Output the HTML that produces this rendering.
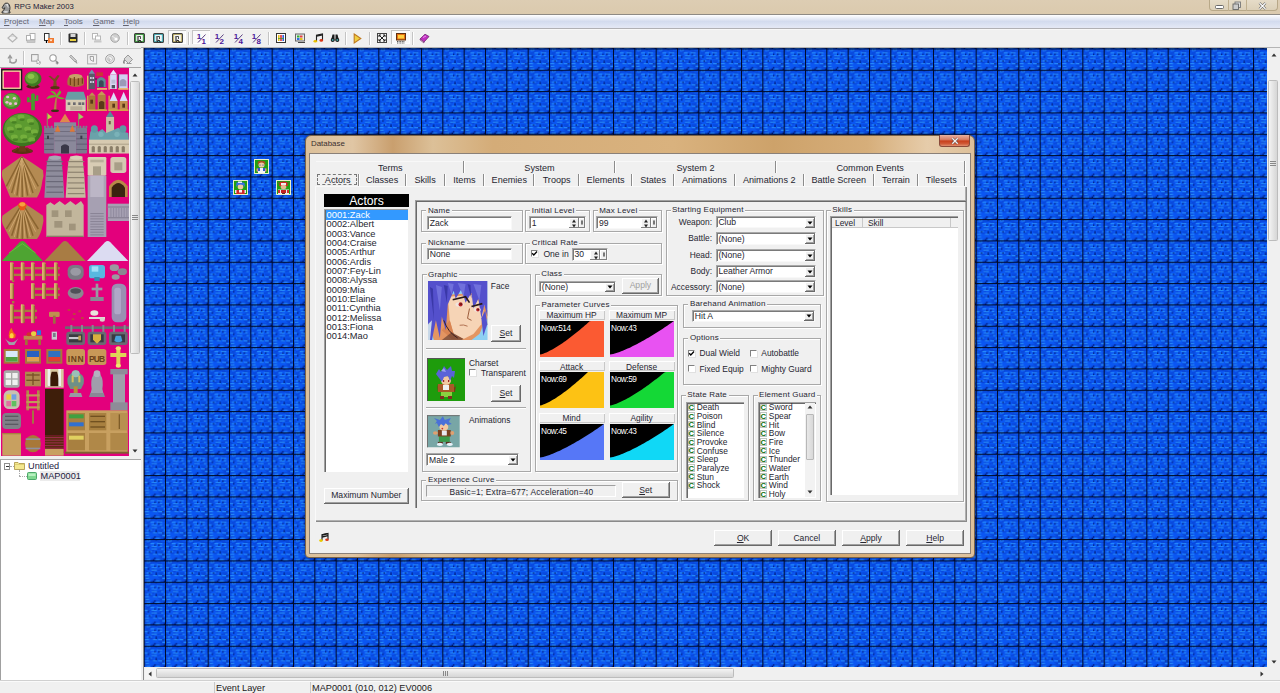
<!DOCTYPE html>
<html><head><meta charset="utf-8">
<style>
*{margin:0;padding:0;box-sizing:border-box}
html,body{width:1280px;height:693px;overflow:hidden;background:#f0f0f0;font-family:"Liberation Sans",sans-serif;color:#262630}
.a{position:absolute}
.t{position:absolute;white-space:nowrap;line-height:1}
svg.a{overflow:visible}
#title{left:0;top:0;width:1280px;height:15px;background:linear-gradient(#ddcdb3,#dbcaae);border-bottom:1px solid #8e8a84}
#menu{left:0;top:15px;width:1280px;height:14px;background:linear-gradient(#ffffff,#f2f4fa 15%,#d3dbee 50%,#dfe5f4 85%,#e4e8f4);border-bottom:1px solid #b0b0b4}
#menu .t{font-size:8px;top:2.5px;color:#646470}
#tool{left:0;top:29px;width:1280px;height:19px;background:#f0f0f0;border-top:1px solid #f8f8f8}
.sep{position:absolute;width:2px;background:#c9c9c9;border-right:1px solid #fff}
#map{left:144px;top:48px;width:1123px;height:619px;background:#0b54e4;overflow:hidden}
#lp{left:0;top:48px;width:141px;height:632px;background:#f0f0f0}
#tileset{left:1px;top:68px;width:128px;height:388px;background:#e3007c;overflow:hidden}
#tree{left:0;top:459px;width:141px;height:221px;background:#fff;border-top:1px solid #a8a8a8;border-left:1px solid #a0a0a0}
#status{left:0;top:680px;width:1280px;height:13px;background:#f0f0f0;border-top:1px solid #d4d4d4}
#status .t{font-size:9.2px;top:2.6px;color:#202020}

</style></head><body>
<div id="title" class="a">
  <div class="t" style="left:14.3px;top:2.8px;font-size:7.7px;color:#1a2038">RPG Maker 2003</div>
</div>
<div id="menu" class="a">
  <div class="t" style="left:4px"><u>P</u>roject</div>
  <div class="t" style="left:39px"><u>M</u>ap</div>
  <div class="t" style="left:64px"><u>T</u>ools</div>
  <div class="t" style="left:93px"><u>G</u>ame</div>
  <div class="t" style="left:123px"><u>H</u>elp</div>
</div>
<div id="tool" class="a"></div>
<div id="lp" class="a"></div>
<div id="tileset" class="a"></div>
<div id="tree" class="a"></div>
<div id="map" class="a">
<svg width="1123" height="619" style="position:absolute;left:0;top:0">
<defs>
<pattern id="water" patternUnits="userSpaceOnUse" width="21.3333" height="21.3333" patternTransform="translate(-0.33,0.42)"><rect width="21.3333" height="21.3333" fill="#0a56f2"/><rect x="0.000" y="0.000" width="4.000" height="1.333" fill="#0846d8"/><rect x="10.667" y="0.000" width="4.000" height="1.333" fill="#0846d8"/><rect x="18.667" y="0.000" width="1.333" height="1.333" fill="#0846d8"/><rect x="2.667" y="1.333" width="4.000" height="1.333" fill="#0846d8"/><rect x="6.667" y="1.333" width="4.000" height="1.333" fill="#0846d8"/><rect x="10.667" y="1.333" width="2.667" height="1.333" fill="#0846d8"/><rect x="13.333" y="1.333" width="2.667" height="1.333" fill="#0846d8"/><rect x="16.000" y="1.333" width="1.333" height="1.333" fill="#0846d8"/><rect x="0.000" y="2.667" width="1.333" height="1.333" fill="#0846d8"/><rect x="1.333" y="2.667" width="1.333" height="1.333" fill="#0846d8"/><rect x="5.333" y="2.667" width="2.667" height="1.333" fill="#0846d8"/><rect x="14.667" y="2.667" width="4.000" height="1.333" fill="#0846d8"/><rect x="18.667" y="2.667" width="2.667" height="1.333" fill="#0846d8"/><rect x="2.667" y="4.000" width="1.333" height="1.333" fill="#0846d8"/><rect x="4.000" y="4.000" width="2.667" height="1.333" fill="#0846d8"/><rect x="14.667" y="4.000" width="2.667" height="1.333" fill="#0846d8"/><rect x="1.333" y="5.333" width="4.000" height="1.333" fill="#0846d8"/><rect x="20.000" y="5.333" width="1.333" height="1.333" fill="#0846d8"/><rect x="1.333" y="6.667" width="1.333" height="1.333" fill="#0846d8"/><rect x="4.000" y="6.667" width="2.667" height="1.333" fill="#0846d8"/><rect x="17.333" y="6.667" width="1.333" height="1.333" fill="#0846d8"/><rect x="0.000" y="8.000" width="1.333" height="1.333" fill="#0846d8"/><rect x="8.000" y="8.000" width="2.667" height="1.333" fill="#0846d8"/><rect x="16.000" y="8.000" width="2.667" height="1.333" fill="#0846d8"/><rect x="18.667" y="8.000" width="1.333" height="1.333" fill="#0846d8"/><rect x="0.000" y="9.333" width="2.667" height="1.333" fill="#0846d8"/><rect x="9.333" y="9.333" width="2.667" height="1.333" fill="#0846d8"/><rect x="12.000" y="9.333" width="4.000" height="1.333" fill="#0846d8"/><rect x="16.000" y="9.333" width="2.667" height="1.333" fill="#0846d8"/><rect x="18.667" y="9.333" width="1.333" height="1.333" fill="#0846d8"/><rect x="1.333" y="10.667" width="2.667" height="1.333" fill="#0846d8"/><rect x="8.000" y="10.667" width="2.667" height="1.333" fill="#0846d8"/><rect x="5.333" y="12.000" width="1.333" height="1.333" fill="#0846d8"/><rect x="14.667" y="12.000" width="2.667" height="1.333" fill="#0846d8"/><rect x="17.333" y="12.000" width="2.667" height="1.333" fill="#0846d8"/><rect x="0.000" y="13.333" width="2.667" height="1.333" fill="#0846d8"/><rect x="5.333" y="13.333" width="4.000" height="1.333" fill="#0846d8"/><rect x="16.000" y="13.333" width="2.667" height="1.333" fill="#0846d8"/><rect x="9.333" y="14.667" width="2.667" height="1.333" fill="#0846d8"/><rect x="18.667" y="14.667" width="2.667" height="1.333" fill="#0846d8"/><rect x="0.000" y="16.000" width="4.000" height="1.333" fill="#0846d8"/><rect x="14.667" y="16.000" width="4.000" height="1.333" fill="#0846d8"/><rect x="18.667" y="16.000" width="1.333" height="1.333" fill="#0846d8"/><rect x="0.000" y="17.333" width="2.667" height="1.333" fill="#0846d8"/><rect x="16.000" y="17.333" width="2.667" height="1.333" fill="#0846d8"/><rect x="0.000" y="18.667" width="4.000" height="1.333" fill="#0846d8"/><rect x="4.000" y="18.667" width="1.333" height="1.333" fill="#0846d8"/><rect x="9.333" y="18.667" width="4.000" height="1.333" fill="#0846d8"/><rect x="13.333" y="18.667" width="4.000" height="1.333" fill="#0846d8"/><rect x="17.333" y="18.667" width="4.000" height="1.333" fill="#0846d8"/><rect x="2.667" y="20.000" width="1.333" height="1.333" fill="#0846d8"/><rect x="4.000" y="20.000" width="1.333" height="1.333" fill="#0846d8"/><rect x="6.667" y="20.000" width="4.000" height="1.333" fill="#0846d8"/><rect x="17.333" y="20.000" width="4.000" height="1.333" fill="#0846d8"/><rect x="2.667" y="1.333" width="4.000" height="1.067" fill="#30a0ff" opacity=".8"/><rect x="6.667" y="4.000" width="4.000" height="1.067" fill="#30a0ff" opacity=".8"/><rect x="13.333" y="4.000" width="5.333" height="1.067" fill="#30a0ff" opacity=".8"/><rect x="0.000" y="6.667" width="4.000" height="1.067" fill="#30a0ff" opacity=".8"/><rect x="8.000" y="6.667" width="5.333" height="1.067" fill="#30a0ff" opacity=".8"/><rect x="16.000" y="6.667" width="2.667" height="1.067" fill="#30a0ff" opacity=".8"/><rect x="8.000" y="9.333" width="5.333" height="1.067" fill="#30a0ff" opacity=".8"/><rect x="17.333" y="9.333" width="2.667" height="1.067" fill="#30a0ff" opacity=".8"/><rect x="2.667" y="12.000" width="5.333" height="1.067" fill="#30a0ff" opacity=".8"/><rect x="20.000" y="12.000" width="1.333" height="1.067" fill="#30a0ff" opacity=".8"/><rect x="1.333" y="14.667" width="4.000" height="1.067" fill="#30a0ff" opacity=".8"/><rect x="9.333" y="14.667" width="4.000" height="1.067" fill="#30a0ff" opacity=".8"/><rect x="14.667" y="14.667" width="5.333" height="1.067" fill="#30a0ff" opacity=".8"/><rect x="1.333" y="17.333" width="4.000" height="1.067" fill="#30a0ff" opacity=".8"/><rect x="18.667" y="17.333" width="2.667" height="1.067" fill="#30a0ff" opacity=".8"/><rect x="2.667" y="20.000" width="4.000" height="1.067" fill="#30a0ff" opacity=".8"/><rect x="12.000" y="20.000" width="4.000" height="1.067" fill="#30a0ff" opacity=".8"/><rect x="9.333" y="20.000" width="1.333" height="1.333" fill="#001a7a"/><rect x="10.667" y="5.333" width="1.333" height="1.333" fill="#001a7a"/><rect x="12.000" y="12.000" width="1.333" height="1.333" fill="#001a7a"/><rect x="20.000" y="20.000" width="1.333" height="1.333" fill="#001a7a"/><rect x="4.000" y="0.000" width="1.333" height="1.333" fill="#001a7a"/><rect x="5.333" y="12.000" width="1.333" height="1.333" fill="#001a7a"/><rect x="12.000" y="13.333" width="1.333" height="1.333" fill="#001a7a"/><rect x="12.000" y="0.000" width="1.333" height="1.333" fill="#001a7a"/><rect x="18.667" y="14.667" width="1.333" height="1.333" fill="#001a7a"/><rect x="14.667" y="5.333" width="1.333" height="1.333" fill="#001a7a"/><rect x="1.333" y="0.000" width="1.333" height="1.333" fill="#001a7a"/><rect x="10.667" y="18.667" width="1.333" height="1.333" fill="#001a7a"/><rect x="4.000" y="8.000" width="1.333" height="1.333" fill="#001a7a"/><rect x="0.000" y="17.333" width="1.333" height="1.333" fill="#001a7a"/><rect x="0" y="0" width="21.3333" height="1.0" fill="#000a28"/><rect x="0" y="0" width="1.0" height="21.3333" fill="#000a28"/></pattern>
</defs>
<rect x="0" y="0" width="1123" height="619" fill="url(#water)"/>
</svg>
</div>
<div id="status" class="a">
  <div class="t" style="left:216px">Event Layer</div>
  <div class="t" style="left:312px">MAP0001 (010, 012) EV0006</div>
</div>
<svg class="a" style="left:7px;top:33px" width="11" height="10" viewBox="0 0 11 10"><path d="M5.5 1L10 5L5.5 9L1 5Z" fill="none" stroke="#b4b4b4" stroke-width="1.2"/><path d="M3 3H8" stroke="#c8c8c8"/></svg><svg class="a" style="left:26px;top:32.5px" width="10" height="10" viewBox="0 0 10 10"><rect x="4" y="0.5" width="5" height="6" fill="#fff" stroke="#b0b0b0"/><rect x="0.5" y="2.5" width="4" height="5" fill="#fff" stroke="#b0b0b0"/><rect x="1" y="7" width="8" height="2.5" fill="#c8c8c8" stroke="#b0b0b0" stroke-width=".6"/></svg><svg class="a" style="left:44px;top:32.5px" width="10" height="11" viewBox="0 0 10 11"><rect x="0.5" y="0.5" width="4.5" height="7" fill="#fff" stroke="#333"/><path d="M2.5 7V10" stroke="#000" stroke-width="1.2"/><rect x="4" y="5" width="6" height="5" fill="#f07a30"/><path d="M5.5 6.5H8.5L7 8.5Z" fill="#fff"/></svg><div class="a" style="left:60px;top:32px;width:2px;height:13px;border-left:1px solid #c4c4c4;border-right:1px solid #fff"></div><svg class="a" style="left:68px;top:33px" width="10" height="10" viewBox="0 0 10 10"><rect x="0.5" y="0.5" width="9" height="9" rx="1" fill="#2a2a2a"/><rect x="2.5" y="1" width="5" height="3" fill="#d8d8d8"/><rect x="2" y="6" width="6" height="2" fill="#e8d040"/></svg><div class="a" style="left:84px;top:32px;width:2px;height:13px;border-left:1px solid #c4c4c4;border-right:1px solid #fff"></div><svg class="a" style="left:92px;top:32.5px" width="10" height="10" viewBox="0 0 10 10"><rect x="0.5" y="0.5" width="5" height="5.5" fill="#fff" stroke="#b8b8b8"/><rect x="3.5" y="3" width="5" height="4" fill="#fff" stroke="#b8b8b8"/><rect x="2" y="7.5" width="7.5" height="2" fill="#c8c8c8"/></svg><svg class="a" style="left:110px;top:32.5px" width="11" height="10" viewBox="0 0 11 10"><circle cx="5" cy="5" r="4.3" fill="#cfcfcf" stroke="#a8a8a8"/><circle cx="6" cy="6" r="1.6" fill="#fff"/><path d="M2 3L5 5" stroke="#eee"/></svg><div class="a" style="left:127px;top:32px;width:2px;height:13px;border-left:1px solid #c4c4c4;border-right:1px solid #fff"></div><svg class="a" style="left:134.4px;top:32.5px" width="11" height="10" viewBox="0 0 11 10"><rect x="0.6" y="0.6" width="9.8" height="8.8" rx="1" fill="#48b848" stroke="#3a3a3a" stroke-width="1.1"/><rect x="2.2" y="2" width="6.6" height="6" fill="#f4f4f4"/><path d="M4 3V8.5L6 7L7.5 9.5" stroke="#111" stroke-width="1" fill="none"/><path d="M4.5 3.5H6.5V6" stroke="#222" stroke-width=".8" fill="none"/></svg><svg class="a" style="left:153px;top:32.5px" width="11" height="10" viewBox="0 0 11 10"><rect x="0.6" y="0.6" width="9.8" height="8.8" rx="1" fill="#58d0dc" stroke="#3a3a3a" stroke-width="1.1"/><rect x="2.2" y="2" width="6.6" height="6" fill="#f4f4f4"/><path d="M4 3V8.5L6 7L7.5 9.5" stroke="#111" stroke-width="1" fill="none"/><path d="M4.5 3.5H6.5V6" stroke="#222" stroke-width=".8" fill="none"/></svg><div class="a" style="left:168px;top:30px;width:18px;height:14px;background:#fafafa;box-shadow:inset 1px 1px 0 #c4c4c4,inset -1px -1px 0 #fff"></div><svg class="a" style="left:172.4px;top:32.5px" width="11" height="10" viewBox="0 0 11 10"><rect x="0.6" y="0.6" width="9.8" height="8.8" rx="1" fill="#e2d27e" stroke="#3a3a3a" stroke-width="1.1"/><rect x="2.2" y="2" width="6.6" height="6" fill="#f4f4f4"/><path d="M4 3V8.5L6 7L7.5 9.5" stroke="#111" stroke-width="1" fill="none"/><path d="M4.5 3.5H6.5V6" stroke="#222" stroke-width=".8" fill="none"/></svg><div class="a" style="left:188px;top:32px;width:2px;height:13px;border-left:1px solid #c4c4c4;border-right:1px solid #fff"></div><div class="a" style="left:192px;top:30px;width:18px;height:14px;background:#fafafa;box-shadow:inset 1px 1px 0 #c4c4c4,inset -1px -1px 0 #fff"></div><svg class="a" style="left:196.5px;top:31.5px" width="11" height="12" viewBox="0 0 11 12"><text x="-0.3" y="6.6" font-family="Liberation Sans" font-weight="bold" font-size="8" fill="#4a1498">1</text><path d="M1 10.5L8.5 2.5" stroke="#5a4080" stroke-width="1"/><text x="4.6" y="11.6" font-family="Liberation Sans" font-weight="bold" font-size="8" fill="#4a1498">1</text></svg><svg class="a" style="left:214.8px;top:31.5px" width="11" height="12" viewBox="0 0 11 12"><text x="-0.3" y="6.6" font-family="Liberation Sans" font-weight="bold" font-size="8" fill="#4a1498">1</text><path d="M1 10.5L8.5 2.5" stroke="#5a4080" stroke-width="1"/><text x="4.6" y="11.6" font-family="Liberation Sans" font-weight="bold" font-size="8" fill="#4a1498">2</text></svg><svg class="a" style="left:233.9px;top:31.5px" width="11" height="12" viewBox="0 0 11 12"><text x="-0.3" y="6.6" font-family="Liberation Sans" font-weight="bold" font-size="8" fill="#4a1498">1</text><path d="M1 10.5L8.5 2.5" stroke="#5a4080" stroke-width="1"/><text x="4.6" y="11.6" font-family="Liberation Sans" font-weight="bold" font-size="8" fill="#4a1498">4</text></svg><svg class="a" style="left:252px;top:31.5px" width="11" height="12" viewBox="0 0 11 12"><text x="-0.3" y="6.6" font-family="Liberation Sans" font-weight="bold" font-size="8" fill="#4a1498">1</text><path d="M1 10.5L8.5 2.5" stroke="#5a4080" stroke-width="1"/><text x="4.6" y="11.6" font-family="Liberation Sans" font-weight="bold" font-size="8" fill="#4a1498">8</text></svg><div class="a" style="left:268px;top:32px;width:2px;height:13px;border-left:1px solid #c4c4c4;border-right:1px solid #fff"></div><svg class="a" style="left:276px;top:32.5px" width="10" height="10" viewBox="0 0 10 10"><rect x="0.5" y="0.5" width="9" height="9" fill="#fff" stroke="#333"/><rect x="2" y="2" width="1.6" height="6" fill="#e8c020"/><rect x="4.2" y="2" width="1.6" height="6" fill="#e03030"/><rect x="6.4" y="2" width="1.6" height="6" fill="#3060e0"/><rect x="2" y="5" width="6" height="1" fill="#30a030" opacity=".7"/></svg><svg class="a" style="left:294.5px;top:32.5px" width="11" height="10" viewBox="0 0 11 10"><rect x="0.5" y="1" width="9" height="7" fill="#e8e8e8" stroke="#666"/><rect x="2" y="2.5" width="2.5" height="2" fill="#30b030"/><rect x="5" y="2.5" width="2.5" height="2" fill="#e04040"/><rect x="2" y="5" width="2.5" height="2" fill="#3070e0"/><rect x="5" y="5" width="2.5" height="2" fill="#e0c020"/><path d="M3 9.5H10" stroke="#444"/></svg><svg class="a" style="left:313px;top:32.5px" width="11" height="10" viewBox="0 0 11 10"><path d="M3.5 8V2.2L9.5 1V7" stroke="#222" stroke-width="1.1" fill="none"/><path d="M3.5 3L9.5 1.8" stroke="#222" stroke-width="1.5"/><ellipse cx="2.3" cy="8.3" rx="1.8" ry="1.3" fill="#e8c000"/><ellipse cx="8.3" cy="7.4" rx="1.8" ry="1.3" fill="#d83818"/></svg><svg class="a" style="left:330px;top:33px" width="10" height="9" viewBox="0 0 10 9"><path d="M1 7.5L2.5 1.5H4.5V7.5Z M9 7.5L7.5 1.5H5.5V7.5Z" fill="#1a1a1a"/><circle cx="2.7" cy="7" r="2" fill="#1a1a1a"/><circle cx="7.3" cy="7" r="2" fill="#1a1a1a"/><circle cx="2.7" cy="7" r="1" fill="#40a0a0"/><circle cx="7.3" cy="7" r="1" fill="#40a0a0"/></svg><div class="a" style="left:345px;top:32px;width:2px;height:13px;border-left:1px solid #c4c4c4;border-right:1px solid #fff"></div><svg class="a" style="left:353px;top:32.5px" width="9" height="11" viewBox="0 0 9 11"><path d="M1.2 1L7.8 5.5L1.2 10Z" fill="#f0d040" stroke="#c07a20" stroke-width="1.1"/></svg><div class="a" style="left:369px;top:32px;width:2px;height:13px;border-left:1px solid #c4c4c4;border-right:1px solid #fff"></div><svg class="a" style="left:376.5px;top:32.5px" width="10" height="10" viewBox="0 0 10 10"><rect x="0.5" y="0.5" width="9" height="9" fill="#f4f4f4" stroke="#444"/><path d="M2 2L8 8M8 2L2 8" stroke="#222" stroke-width="1"/><path d="M2 2H4M2 2V4M8 8H6M8 8V6M8 2H6M8 2V4M2 8H4M2 8V6" stroke="#222" stroke-width="1"/></svg><div class="a" style="left:391px;top:30px;width:19px;height:14px;background:#fafafa;box-shadow:inset 1px 1px 0 #c4c4c4,inset -1px -1px 0 #fff"></div><svg class="a" style="left:395.5px;top:32.5px" width="10" height="11" viewBox="0 0 10 11"><rect x="0.5" y="0.5" width="9" height="6.5" fill="#e87010" stroke="#603010"/><rect x="2" y="2" width="6" height="3.5" fill="#ffd040"/><path d="M1 8.5H9M1 10H9" stroke="#555" stroke-dasharray="1 .6"/></svg><div class="a" style="left:412px;top:32px;width:2px;height:13px;border-left:1px solid #c4c4c4;border-right:1px solid #fff"></div><svg class="a" style="left:419px;top:32.5px" width="11" height="10" viewBox="0 0 11 10"><path d="M1 6L6 1.2L10 3.5L5 9Z" fill="#c030c0" stroke="#702070" stroke-width=".8"/><path d="M1 6L5 9V10L1 7Z" fill="#f0e0f0" stroke="#702070" stroke-width=".6"/><path d="M4 4.5L7 3" stroke="#f8a8f8" stroke-width=".8"/></svg><svg class="a" style="left:6.5px;top:53.5px" width="11" height="10" viewBox="0 0 11 10"><path d="M3 9V2.5M1 4.5L3 1.5L5 4.5" stroke="#9a9a9a" stroke-width="1.3" fill="none"/><path d="M3 7.5Q5 10 8 8.5Q10 7 9 5" stroke="#9a9a9a" stroke-width="1.4" fill="none"/></svg><div class="a" style="left:23px;top:51px;width:2px;height:14px;border-left:1px solid #c4c4c4;border-right:1px solid #fff"></div><svg class="a" style="left:31px;top:54px" width="10" height="10" viewBox="0 0 10 10"><rect x="0.6" y="0.6" width="6.5" height="6.5" fill="none" stroke="#9a9a9a" stroke-width="1"/><path d="M6 5.5V10L7.2 8.8L8.5 10.5L9.3 9.8L8.2 8.3H9.8Z" fill="#fff" stroke="#9a9a9a" stroke-width=".7"/></svg><svg class="a" style="left:49.3px;top:54px" width="10" height="10" viewBox="0 0 10 10"><circle cx="4" cy="4" r="3.2" fill="#fff" stroke="#9a9a9a" stroke-width="1.1"/><path d="M6.5 6.5L9 9" stroke="#9a9a9a" stroke-width="1.3"/><path d="M8.2 7.5V10.5M6.7 9H9.7" stroke="#777" stroke-width=".8"/></svg><svg class="a" style="left:68px;top:54px" width="10" height="10" viewBox="0 0 10 10"><path d="M1.5 2.5L3 1L8.5 6.5L7 8Z" fill="#c8c8c8" stroke="#9a9a9a" stroke-width=".8"/><path d="M7 8L9 9.5L8.5 6.5" fill="#888"/><path d="M8.5 10L10 8.5" stroke="#aaa" stroke-width=".6"/></svg><svg class="a" style="left:86.6px;top:53.5px" width="10" height="10.5" viewBox="0 0 10 10.5"><rect x="0.6" y="0.6" width="9" height="9.3" fill="#f2f2f2" stroke="#b0b0b0" stroke-width="1"/><path d="M3 2.5L6.5 2.5V7.5L3.5 6Z" fill="none" stroke="#9a9a9a" stroke-width=".9"/></svg><svg class="a" style="left:105.3px;top:54px" width="10" height="10" viewBox="0 0 10 10"><circle cx="5" cy="5" r="4.3" fill="#f4f4f4" stroke="#9a9a9a" stroke-width="1"/><circle cx="5" cy="5" r="2.5" fill="none" stroke="#b8b8b8" stroke-width=".8"/><path d="M4 4V6.5L5.5 5.5" stroke="#9a9a9a" stroke-width=".7" fill="none"/></svg><svg class="a" style="left:123.4px;top:53.5px" width="11" height="10.5" viewBox="0 0 11 10.5"><path d="M5 1L9.5 5.5L5.5 9.5L1 5Z" fill="#d8d8d8" stroke="#9a9a9a" stroke-width="1"/><path d="M1.5 6Q0 8.5 1.5 9.5" stroke="#777" stroke-width="1.3" fill="none"/><path d="M3.5 9.5H8.5" stroke="#9a9a9a" stroke-width="1"/></svg><svg class="a" style="left:1px;top:68.5px" width="128" height="388" viewBox="0 0 96 291" preserveAspectRatio="none"><rect x="0.7" y="0.7" width="14.6" height="14.6" fill="none" stroke="#1a1a1a" stroke-width="1.3"/><rect x="1.6" y="1.6" width="12.8" height="12.8" fill="none" stroke="#f8f0a0" stroke-width=".9"/><ellipse cx="24" cy="13.2" rx="5" ry="1.6" fill="#4a2810" /><rect x="22.6" y="10" width="2.8" height="3.5" fill="#7a4a20" /><ellipse cx="24" cy="7.3" rx="6.4" ry="5.6" fill="#3e7a22" /><ellipse cx="23.2" cy="6.6" rx="5" ry="4.4" fill="#64a236" /><ellipse cx="22.5" cy="5.5" rx="2.5" ry="2" fill="#8cc44a" /><path d="M39 14.5L39.5 9L35.5 5.5L37 5L40 7.5L42.5 4.5L44 5L41.5 9L42 14.5Z" fill="#7a4a22" /><ellipse cx="40.5" cy="14" rx="3.5" ry="1.2" fill="#5a3214" /><path d="M50 12Q49 6 52 5Q56 3 60 5Q63 6 62 12Q56 15 50 12Z" fill="#a8743e" /><ellipse cx="56" cy="5.5" rx="5" ry="1.8" fill="#c8a068" /><path d="M52 7V12M55 6V13M58 7V12M61 7V11" fill="none" stroke="#6a3e18" stroke-width=".8"/><rect x="64.6" y="5" width="1" height="10.5" fill="#e8d868" /><rect x="65.8" y="3.5" width="4.6" height="11.5" fill="#5a5a68" /><path d="M65.8 3.5L68.1 0.3L70.4 3.5Z" fill="#6a9aa8" /><rect x="66.8" y="6" width="1.2" height="1.5" fill="#d0d0e0" /><rect x="68.6" y="6" width="1.2" height="1.5" fill="#d0d0e0" /><rect x="66.8" y="9" width="1.2" height="1.5" fill="#d0d0e0" /><rect x="68.6" y="9" width="1.2" height="1.5" fill="#d0d0e0" /><rect x="71.5" y="2.5" width="5" height="2.8" fill="#c83838" /><path d="M72 13.5V8Q75 4 78.5 8V13.5Z" fill="#5c8e90" /><path d="M73.5 13.5V9.5Q75 7.5 77 9.5V13.5Z" fill="#3a4a58" /><rect x="72" y="14.4" width="7.5" height="1.1" fill="#e8d868" /><rect x="70.4" y="7" width="1.6" height="1" fill="#3a3a48" /><rect x="80.6" y="5" width="1" height="10.5" fill="#e8d868" /><rect x="81.8" y="4" width="5" height="11" fill="#d8d8f4" /><path d="M81.8 4L84.3 0.5L86.8 4Z" fill="#e8e8ff" /><rect x="82.8" y="8" width="3" height="3" fill="#bcbcd8" /><rect x="83" y="12" width="2.5" height="2.5" fill="#505060" /><rect x="88.5" y="4" width="6.5" height="10.5" fill="#d0d0f0" /><rect x="87.8" y="4" width="0.8" height="10.5" fill="#505060" /><path d="M89 9Q91.5 6 94 9V13H89Z" fill="#9a9ab8" /><rect x="88" y="14.4" width="7.5" height="1.1" fill="#e8d868" /><ellipse cx="8" cy="24" rx="6.8" ry="6.2" fill="#4a8a2a" /><ellipse cx="7.5" cy="23.5" rx="5.4" ry="5" fill="#6aaa40" /><ellipse cx="5" cy="21" rx="1.2" ry="1" fill="#f0b8d8" /><ellipse cx="10" cy="22" rx="1.2" ry="1" fill="#f0b8d8" /><ellipse cx="7" cy="26" rx="1.2" ry="1" fill="#f0b8d8" /><ellipse cx="11" cy="26" rx="1.2" ry="1" fill="#f0b8d8" /><ellipse cx="4.5" cy="25" rx="1.2" ry="1" fill="#f0b8d8" /><path d="M22.6 31V19Q24 17.5 25.4 19V31Z" fill="#4a9a2e" /><path d="M22.6 25H19.5V21.5Q20.5 20.5 21.5 21.5V23.5H22.6Z M25.4 24H28V20Q27 19 26.2 20V22.5H25.4Z" fill="#4a9a2e" /><path d="M39.5 31.5Q40 26 41 21.5L42 21.5Q41.5 26 41.5 31.5Z" fill="#b48446" /><ellipse cx="40.5" cy="31.3" rx="3" ry="1" fill="#3a3010" /><path d="M41 21L34 22.5Q36 18.5 41 20L37 16.5Q41 16 41.5 19.5L44 16Q47 17.5 42.5 20.5L48 22Q45 23.5 42 21.5Z" fill="#6cae2e" /><rect x="48.5" y="22.5" width="15" height="9" fill="#d6ccb4" /><path d="M48 23L50 17H62L64 23Z" fill="#6a9ca4" /><rect x="50" y="25" width="2" height="2" fill="#6a6a70" /><rect x="54" y="25" width="2" height="2" fill="#6a6a70" /><rect x="58" y="25" width="2" height="2" fill="#6a6a70" /><rect x="60.5" y="25" width="2" height="2" fill="#6a6a70" /><rect x="52" y="28" width="9" height="3" fill="#b8ae98" /><rect x="64.6" y="20" width="1" height="11.5" fill="#d8b048" /><rect x="65.8" y="20" width="5" height="11" fill="#a87838" /><rect x="67" y="23" width="2" height="3" fill="#5a3818" /><path d="M65.8 20L68.3 17.5L70.8 20Z" fill="#c09050" /><rect x="72.5" y="19.5" width="6" height="11.5" fill="#b08040" /><path d="M72.5 19.5L75.5 16.5L78.5 19.5Z" fill="#c89858" /><path d="M73.5 30V25Q75.5 23 77.5 25V30Z" fill="#5a3818" /><rect x="64.6" y="30.4" width="15" height="1" fill="#d8b048" /><rect x="80.6" y="20" width="1" height="11.5" fill="#d8b048" /><path d="M81.5 24L84.5 17.5L87.5 24Z" fill="#dcdcf8" /><rect x="81.5" y="24" width="6" height="7" fill="#c09050" /><rect x="83.5" y="26" width="2" height="3" fill="#5a3818" /><path d="M89 24L92 17L95 24Z" fill="#dcdcf8" /><rect x="89" y="24" width="6" height="7" fill="#c09050" /><rect x="91" y="26" width="2" height="3" fill="#5a3818" /><rect x="80.6" y="30.4" width="15" height="1" fill="#d8b048" /><ellipse cx="16" cy="61.5" rx="8" ry="2.2" fill="#5a3212" /><path d="M13 62L14.5 55H17.5L19 62Z" fill="#6a3a18" /><path d="M9 62L13 59M23 62L19 59" fill="none" stroke="#6a3a18" stroke-width="1.2"/><ellipse cx="16" cy="45.5" rx="14.8" ry="12.5" fill="#3e7420" /><ellipse cx="15.5" cy="44.5" rx="13" ry="11" fill="#5c9a30" /><ellipse cx="9" cy="38" rx="2.6" ry="1.8" fill="#7ab440" opacity=".8"/><ellipse cx="9.8" cy="40" rx="2" ry="1" fill="#3e7620" opacity=".7"/><ellipse cx="15" cy="36" rx="2.6" ry="1.8" fill="#7ab440" opacity=".8"/><ellipse cx="15.8" cy="38" rx="2" ry="1" fill="#3e7620" opacity=".7"/><ellipse cx="22" cy="39" rx="2.6" ry="1.8" fill="#7ab440" opacity=".8"/><ellipse cx="22.8" cy="41" rx="2" ry="1" fill="#3e7620" opacity=".7"/><ellipse cx="7" cy="45" rx="2.6" ry="1.8" fill="#7ab440" opacity=".8"/><ellipse cx="7.8" cy="47" rx="2" ry="1" fill="#3e7620" opacity=".7"/><ellipse cx="13" cy="43" rx="2.6" ry="1.8" fill="#7ab440" opacity=".8"/><ellipse cx="13.8" cy="45" rx="2" ry="1" fill="#3e7620" opacity=".7"/><ellipse cx="20" cy="45" rx="2.6" ry="1.8" fill="#7ab440" opacity=".8"/><ellipse cx="20.8" cy="47" rx="2" ry="1" fill="#3e7620" opacity=".7"/><ellipse cx="25" cy="47" rx="2.6" ry="1.8" fill="#7ab440" opacity=".8"/><ellipse cx="25.8" cy="49" rx="2" ry="1" fill="#3e7620" opacity=".7"/><ellipse cx="10" cy="51" rx="2.6" ry="1.8" fill="#7ab440" opacity=".8"/><ellipse cx="10.8" cy="53" rx="2" ry="1" fill="#3e7620" opacity=".7"/><ellipse cx="17" cy="51" rx="2.6" ry="1.8" fill="#7ab440" opacity=".8"/><ellipse cx="17.8" cy="53" rx="2" ry="1" fill="#3e7620" opacity=".7"/><ellipse cx="23" cy="53" rx="2.6" ry="1.8" fill="#7ab440" opacity=".8"/><ellipse cx="23.8" cy="55" rx="2" ry="1" fill="#3e7620" opacity=".7"/><path d="M34.5 33L38.3 36L34.5 38Z" fill="#c8d040" /><rect x="34.3" y="33" width="0.8" height="11" fill="#8a8a60" /><path d="M58 33L62 36L58 38Z" fill="#a0d060" /><rect x="57.8" y="33" width="0.8" height="11" fill="#8a8a60" /><path d="M44 40L48 33.5L52 40Z" fill="#e0884c" /><rect x="39.8" y="40" width="16.5" height="23.4" fill="#8a889a" /><rect x="40" y="43" width="16" height="0.7" fill="#6e6c7e" /><rect x="40" y="46.5" width="16" height="0.7" fill="#6e6c7e" /><rect x="40" y="50" width="16" height="0.7" fill="#6e6c7e" /><rect x="40" y="53.5" width="16" height="0.7" fill="#6e6c7e" /><path d="M40.5 47L42.5 42L44.5 47Z M51.5 47L53.5 42L55.5 47Z" fill="#e07838" /><rect x="32.3" y="44" width="7.5" height="19.4" fill="#7c7a8e" rx="1"/><rect x="56.3" y="44" width="8.2" height="19.4" fill="#7c7a8e" rx="1"/><rect x="32.3" y="42.6" width="1.4" height="1.6" fill="#7c7a8e" /><rect x="34.8" y="42.6" width="1.4" height="1.6" fill="#7c7a8e" /><rect x="37.3" y="42.6" width="1.4" height="1.6" fill="#7c7a8e" /><rect x="56.3" y="42.6" width="1.4" height="1.6" fill="#7c7a8e" /><rect x="58.8" y="42.6" width="1.4" height="1.6" fill="#7c7a8e" /><rect x="61.3" y="42.6" width="1.4" height="1.6" fill="#7c7a8e" /><rect x="63.3" y="42.6" width="1.4" height="1.6" fill="#7c7a8e" /><rect x="32.5" y="48" width="7" height="0.7" fill="#5e5c70" /><rect x="56.5" y="48" width="8" height="0.7" fill="#5e5c70" /><rect x="32.5" y="52" width="7" height="0.7" fill="#5e5c70" /><rect x="56.5" y="52" width="8" height="0.7" fill="#5e5c70" /><rect x="32.5" y="56" width="7" height="0.7" fill="#5e5c70" /><rect x="56.5" y="56" width="8" height="0.7" fill="#5e5c70" /><rect x="32.5" y="60" width="7" height="0.7" fill="#5e5c70" /><rect x="56.5" y="60" width="8" height="0.7" fill="#5e5c70" /><rect x="34.5" y="50" width="1.5" height="2.5" fill="#3a3848" /><rect x="59.5" y="50" width="1.5" height="2.5" fill="#3a3848" /><path d="M45 63.4V58Q48 55 51 58V63.4Z" fill="#3a3848" /><rect x="78.8" y="36" width="6" height="16" fill="#cabea2" /><path d="M78.8 36L81.8 31.5L84.8 36Z" fill="#5a8a98" /><rect x="80.8" y="39" width="1.5" height="2.5" fill="#6a5e48" /><path d="M66 54L67 47L70 44L73 47L76 45L79 48L84 46L88 44L92 47L95.5 48L96 54Z" fill="#6aa2aa" /><ellipse cx="70" cy="45" rx="2.6" ry="2.8" fill="#5e9aa2" /><ellipse cx="91.5" cy="45" rx="2.6" ry="2.8" fill="#5e9aa2" /><ellipse cx="75" cy="49" rx="2" ry="2" fill="#7ab2b8" /><ellipse cx="87" cy="49" rx="2" ry="2" fill="#7ab2b8" /><rect x="66" y="53" width="30" height="10.4" fill="#d6cab0" /><path d="M68 62.5V58.5Q69.2 57 70.4 58.5V62.5Z" fill="#8a7e68" /><path d="M72.5 62.5V58.5Q73.7 57 74.9 58.5V62.5Z" fill="#8a7e68" /><path d="M77 62.5V58.5Q78.2 57 79.4 58.5V62.5Z" fill="#8a7e68" /><path d="M81.5 62.5V58.5Q82.7 57 83.9 58.5V62.5Z" fill="#8a7e68" /><path d="M86 62.5V58.5Q87.2 57 88.4 58.5V62.5Z" fill="#8a7e68" /><path d="M90.5 62.5V58.5Q91.7 57 92.9 58.5V62.5Z" fill="#8a7e68" /><rect x="66" y="56" width="30" height="0.8" fill="#b0a48c" /><path d="M15.6 65.4Q9 70 1 76Q0 80 2 84Q5 92 7 96.4H27Q30 92 31 84Q32.5 80 31.5 76Q23 70 15.6 65.4Z" fill="#b48a52" /><path d="M15.6 66L4 88" fill="none" stroke="#8a6430" stroke-width="1.1"/><path d="M15.6 66L8 93" fill="none" stroke="#8a6430" stroke-width="1.1"/><path d="M15.6 66L12 95" fill="none" stroke="#8a6430" stroke-width="1.1"/><path d="M15.6 66L16 96" fill="none" stroke="#8a6430" stroke-width="1.1"/><path d="M15.6 66L20 95" fill="none" stroke="#8a6430" stroke-width="1.1"/><path d="M15.6 66L24 93" fill="none" stroke="#8a6430" stroke-width="1.1"/><path d="M15.6 66L28 88" fill="none" stroke="#8a6430" stroke-width="1.1"/><path d="M15.6 67L6 90" fill="none" stroke="#d0a870" stroke-width=".7"/><path d="M15.6 67L10 94" fill="none" stroke="#d0a870" stroke-width=".7"/><path d="M15.6 67L14 96" fill="none" stroke="#d0a870" stroke-width=".7"/><path d="M15.6 67L18 96" fill="none" stroke="#d0a870" stroke-width=".7"/><path d="M15.6 67L22 94" fill="none" stroke="#d0a870" stroke-width=".7"/><path d="M15.6 67L26 90" fill="none" stroke="#d0a870" stroke-width=".7"/><path d="M36 65.5H45L45.5 70L46.5 80L47.5 96.5H32.5L33.5 80L34.5 70Z" fill="#8e8c9c" /><rect x="34" y="69" width="12.5" height="0.9" fill="#6a6878" /><rect x="34" y="72" width="12.5" height="0.9" fill="#6a6878" /><rect x="34" y="76" width="12.5" height="0.9" fill="#6a6878" /><rect x="34" y="80" width="12.5" height="0.9" fill="#6a6878" /><rect x="34" y="84" width="12.5" height="0.9" fill="#6a6878" /><rect x="34" y="88" width="12.5" height="0.9" fill="#6a6878" /><rect x="34" y="92" width="12.5" height="0.9" fill="#6a6878" /><ellipse cx="40.5" cy="66.5" rx="4.5" ry="1.6" fill="#a8a6b4" /><path d="M52 65.5H61L61.5 70L62.5 80L63.5 96.5H48.5L49.5 80L50.5 70Z" fill="#c6baa0" /><rect x="50" y="69" width="12.5" height="0.9" fill="#8e8470" /><rect x="50" y="73" width="12.5" height="0.9" fill="#8e8470" /><rect x="50" y="77" width="12.5" height="0.9" fill="#8e8470" /><rect x="50" y="81" width="12.5" height="0.9" fill="#8e8470" /><rect x="50" y="85" width="12.5" height="0.9" fill="#8e8470" /><rect x="50" y="89" width="12.5" height="0.9" fill="#8e8470" /><rect x="50" y="93" width="12.5" height="0.9" fill="#8e8470" /><ellipse cx="56.5" cy="66.5" rx="4.5" ry="1.6" fill="#d8ceb8" /><rect x="65" y="66" width="14" height="14" fill="#d8ccb4" rx="1"/><rect x="67" y="68" width="10" height="2" fill="#b8ae98" /><rect x="69" y="73" width="6" height="7" fill="#a89e88" /><rect x="82" y="66" width="12" height="12" fill="#d4c8b2" rx="2"/><rect x="85" y="70" width="6" height="6" fill="#a89e88" /><rect x="65" y="80" width="14" height="16" fill="#aaa4b4" /><rect x="67" y="80" width="10" height="16" fill="#bcb6c6" /><path d="M81 96V88Q88 78 95 88V96Z" fill="#b88848" /><path d="M83 96V89Q88 82 93 89V96Z" fill="#3a2210" /><path d="M16 100Q9 104 1 110Q0 114 2 118Q5 124 7 127.5H27Q30 124 31 118Q32.5 114 31.5 110Q23 104 16 100Z" fill="#b08650" /><path d="M16 101L4 120" fill="none" stroke="#8a6430" stroke-width="1.1"/><path d="M16 101L8 125" fill="none" stroke="#8a6430" stroke-width="1.1"/><path d="M16 101L12 127" fill="none" stroke="#8a6430" stroke-width="1.1"/><path d="M16 101L16 127.5" fill="none" stroke="#8a6430" stroke-width="1.1"/><path d="M16 101L20 127" fill="none" stroke="#8a6430" stroke-width="1.1"/><path d="M16 101L24 125" fill="none" stroke="#8a6430" stroke-width="1.1"/><path d="M16 101L28 120" fill="none" stroke="#8a6430" stroke-width="1.1"/><path d="M16 102L6 122" fill="none" stroke="#d0a870" stroke-width=".7"/><path d="M16 102L10 126" fill="none" stroke="#d0a870" stroke-width=".7"/><path d="M16 102L14 127" fill="none" stroke="#d0a870" stroke-width=".7"/><path d="M16 102L18 127" fill="none" stroke="#d0a870" stroke-width=".7"/><path d="M16 102L22 126" fill="none" stroke="#d0a870" stroke-width=".7"/><path d="M16 102L26 122" fill="none" stroke="#d0a870" stroke-width=".7"/><path d="M12.5 102Q16 97 19.5 102L17.5 106H14.5Z" fill="#e85818" /><ellipse cx="16" cy="101.5" rx="2.2" ry="1.6" fill="#f8a040" /><rect x="34" y="102" width="28" height="24" fill="#c2b69c" /><path d="M34 102L37 100L40 102L44 99L48 102L52 99L56 102L60 99L62 102Z" fill="#c2b69c" /><rect x="38" y="106" width="5" height="5" fill="#a0947c" /><rect x="48" y="106" width="5" height="5" fill="#a0947c" /><rect x="40" y="114" width="6" height="5" fill="#a0947c" /><rect x="51" y="116" width="5" height="5" fill="#a0947c" /><rect x="34" y="125" width="28" height="1" fill="#8a7e68" /><rect x="65" y="96" width="14" height="30" fill="#a6a0b2" /><rect x="67" y="108" width="10" height="0.8" fill="#8a8496" /><rect x="67" y="110" width="10" height="0.8" fill="#8a8496" /><rect x="67" y="112" width="10" height="0.8" fill="#8a8496" /><rect x="67" y="114" width="10" height="0.8" fill="#8a8496" /><rect x="67" y="116" width="10" height="0.8" fill="#8a8496" /><rect x="67" y="118" width="10" height="0.8" fill="#8a8496" /><rect x="67" y="120" width="10" height="0.8" fill="#8a8496" /><rect x="67" y="122" width="10" height="0.8" fill="#8a8496" /><rect x="67" y="124" width="10" height="0.8" fill="#8a8496" /><rect x="80" y="101" width="16" height="13" fill="#a6a0b2" /><rect x="80" y="103" width="16" height="1" fill="#8a8496" /><rect x="80" y="111" width="16" height="1" fill="#8a8496" /><rect x="82" y="104" width="0.8" height="7" fill="#928ca0" /><rect x="84" y="104" width="0.8" height="7" fill="#928ca0" /><rect x="86" y="104" width="0.8" height="7" fill="#928ca0" /><rect x="88" y="104" width="0.8" height="7" fill="#928ca0" /><rect x="90" y="104" width="0.8" height="7" fill="#928ca0" /><rect x="92" y="104" width="0.8" height="7" fill="#928ca0" /><rect x="94" y="104" width="0.8" height="7" fill="#928ca0" /><path d="M0.5 144L14 130Q16 128 18 130L31.5 144Z" fill="#4ea432" /><path d="M6 138L16 131L26 138" fill="none" stroke="#70c040" stroke-width=".6"/><path d="M32.5 144L46 130Q48 128 50 130L63.5 144Z" fill="#a87c44" /><path d="M64.5 144L78 130Q80 128 82 130L95.5 144Z" fill="#dcdcf2" /><rect x="8.25" y="148.5" width="35.75" height="1.8" fill="#a87a40" /><rect x="8.25" y="153.5" width="35.75" height="1.8" fill="#a87a40" /><rect x="24" y="164" width="20" height="1.8" fill="#a87a40" /><rect x="24" y="168.5" width="20" height="1.8" fill="#a87a40" /><rect x="8.25" y="180.5" width="18.75" height="1.8" fill="#a87a40" /><rect x="8.25" y="185.5" width="18.75" height="1.8" fill="#a87a40" /><rect x="8.25" y="158" width="1.75" height="1.8" fill="#a87a40" /><rect x="8.25" y="174" width="1.75" height="1.8" fill="#a87a40" /><rect x="6.85" y="145" width="2.8" height="13.599999999999994" fill="#c89a58" rx="1.2"/><rect x="6.85" y="145" width="1" height="13.599999999999994" fill="#e0b878" rx=".5"/><rect x="8.85" y="146" width="0.8" height="12.599999999999994" fill="#8a6030" /><rect x="14.9" y="145" width="2.8" height="13.599999999999994" fill="#c89a58" rx="1.2"/><rect x="14.9" y="145" width="1" height="13.599999999999994" fill="#e0b878" rx=".5"/><rect x="16.900000000000002" y="146" width="0.8" height="12.599999999999994" fill="#8a6030" /><rect x="22.6" y="145" width="2.8" height="13.599999999999994" fill="#c89a58" rx="1.2"/><rect x="22.6" y="145" width="1" height="13.599999999999994" fill="#e0b878" rx=".5"/><rect x="24.6" y="146" width="0.8" height="12.599999999999994" fill="#8a6030" /><rect x="30.85" y="145" width="2.8" height="13.599999999999994" fill="#c89a58" rx="1.2"/><rect x="30.85" y="145" width="1" height="13.599999999999994" fill="#e0b878" rx=".5"/><rect x="32.85" y="146" width="0.8" height="12.599999999999994" fill="#8a6030" /><rect x="39.85" y="145" width="2.8" height="13.599999999999994" fill="#c89a58" rx="1.2"/><rect x="39.85" y="145" width="1" height="13.599999999999994" fill="#e0b878" rx=".5"/><rect x="41.85" y="146" width="0.8" height="12.599999999999994" fill="#8a6030" /><rect x="6.85" y="160.5" width="2.8" height="12.0" fill="#c89a58" rx="1.2"/><rect x="6.85" y="160.5" width="1" height="12.0" fill="#e0b878" rx=".5"/><rect x="8.85" y="161.5" width="0.8" height="11.0" fill="#8a6030" /><rect x="22.6" y="160.5" width="2.8" height="12.0" fill="#c89a58" rx="1.2"/><rect x="22.6" y="160.5" width="1" height="12.0" fill="#e0b878" rx=".5"/><rect x="24.6" y="161.5" width="0.8" height="11.0" fill="#8a6030" /><rect x="30.85" y="160.5" width="2.8" height="12.0" fill="#c89a58" rx="1.2"/><rect x="30.85" y="160.5" width="1" height="12.0" fill="#e0b878" rx=".5"/><rect x="32.85" y="161.5" width="0.8" height="11.0" fill="#8a6030" /><rect x="39.85" y="160.5" width="2.8" height="12.0" fill="#c89a58" rx="1.2"/><rect x="39.85" y="160.5" width="1" height="12.0" fill="#e0b878" rx=".5"/><rect x="41.85" y="161.5" width="0.8" height="11.0" fill="#8a6030" /><rect x="6.85" y="176.5" width="2.8" height="14.099999999999994" fill="#c89a58" rx="1.2"/><rect x="6.85" y="176.5" width="1" height="14.099999999999994" fill="#e0b878" rx=".5"/><rect x="8.85" y="177.5" width="0.8" height="13.099999999999994" fill="#8a6030" /><rect x="14.9" y="176.5" width="2.8" height="14.099999999999994" fill="#c89a58" rx="1.2"/><rect x="14.9" y="176.5" width="1" height="14.099999999999994" fill="#e0b878" rx=".5"/><rect x="16.900000000000002" y="177.5" width="0.8" height="13.099999999999994" fill="#8a6030" /><rect x="22.6" y="176.5" width="2.8" height="14.099999999999994" fill="#c89a58" rx="1.2"/><rect x="22.6" y="176.5" width="1" height="14.099999999999994" fill="#e0b878" rx=".5"/><rect x="24.6" y="177.5" width="0.8" height="13.099999999999994" fill="#8a6030" /><rect x="36" y="182" width="8" height="4" fill="#c09050" rx="1"/><rect x="39" y="185" width="2" height="6" fill="#9a7040" /><rect x="50" y="147" width="12" height="11" fill="#7a7a84" rx="4"/><ellipse cx="56" cy="152" rx="4" ry="3" fill="#9a9aa4" /><rect x="66" y="147" width="12" height="10" fill="#58b8e0" rx="2"/><rect x="68" y="148" width="5" height="4" fill="#a0e0f8" /><rect x="70" y="156" width="4" height="3" fill="#3888b0" /><ellipse cx="85" cy="149" rx="3.5" ry="2.5" fill="#9a98a0" /><ellipse cx="91" cy="152" rx="3.5" ry="2.5" fill="#8a8890" /><ellipse cx="86" cy="156" rx="3" ry="2" fill="#9a98a0" /><ellipse cx="56" cy="168" rx="6" ry="4.5" fill="#8a8890" /><ellipse cx="56" cy="166.5" rx="4" ry="2" fill="#505058" /><rect x="71" y="161" width="2" height="10" fill="#9a98a4" /><rect x="68" y="164" width="8" height="2" fill="#9a98a4" /><rect x="67" y="171" width="10" height="3" fill="#8a8894" /><rect x="83" y="161" width="11" height="29" fill="#9a90b2" rx="4"/><rect x="85" y="164" width="5" height="20" fill="#b0a8c8" rx="2"/><rect x="50" y="180" width="2" height="1.5" fill="#c04040" /><rect x="54" y="183" width="2" height="1.5" fill="#c04040" /><rect x="58" y="181" width="2" height="1.5" fill="#c04040" /><rect x="53" y="187" width="2" height="1.5" fill="#c04040" /><rect x="60" y="186" width="2" height="1.5" fill="#c04040" /><ellipse cx="70" cy="183" rx="3" ry="2" fill="#e8e4dc" /><rect x="66" y="186" width="12" height="1.5" fill="#e0dcd4" /><ellipse cx="76" cy="188" rx="2" ry="1.5" fill="#d8d4cc" /><path d="M3 202Q8 208 13 202L10 207H6Z" fill="#a0a0a8" /><path d="M6 202Q5 197 8 194Q9 198 11 199Q11 202 10 202Z" fill="#f06818" /><ellipse cx="8" cy="200" rx="1.5" ry="2" fill="#ffd040" /><rect x="17" y="200" width="14" height="3" fill="#c08a48" /><rect x="18" y="203" width="2" height="4" fill="#a07038" /><rect x="28" y="203" width="2" height="4" fill="#a07038" /><ellipse cx="21" cy="199" rx="1.8" ry="1.5" fill="#d03030" /><ellipse cx="24.5" cy="198.5" rx="2" ry="1.8" fill="#e8d040" /><rect x="27" y="196" width="3" height="3.5" fill="#3070e0" /><rect x="38" y="197" width="4" height="6" fill="#c8c8d0" /><rect x="39" y="198" width="2" height="3" fill="#7a7a88" /><rect x="48" y="193" width="48" height="2" fill="#6a6a70" /><rect x="52" y="192" width="1.5" height="6" fill="#888890" /><rect x="60" y="192" width="1.5" height="6" fill="#888890" /><rect x="68" y="192" width="1.5" height="6" fill="#888890" /><rect x="76" y="192" width="1.5" height="6" fill="#888890" /><rect x="84" y="192" width="1.5" height="6" fill="#888890" /><rect x="92" y="192" width="1.5" height="6" fill="#888890" /><rect x="49" y="197" width="14" height="10" fill="#6a6a72" rx="2"/><rect x="51" y="199" width="10" height="6" fill="#3a3a40" /><rect x="65" y="197" width="14" height="10" fill="#6a6a72" rx="2"/><rect x="67" y="199" width="10" height="6" fill="#3a3a40" /><rect x="81" y="197" width="14" height="10" fill="#6a6a72" rx="2"/><rect x="83" y="199" width="10" height="6" fill="#3a3a40" /><rect x="51" y="201" width="8" height="1.6" fill="#c8c8d0" /><rect x="58" y="200" width="2" height="3.5" fill="#c0a050" /><path d="M69 199H75V203L72 206L69 203Z" fill="#d8b040" /><path d="M86 200H90L91 204Q88 206 85 204Z" fill="#48a0d8" /><rect x="2" y="210" width="12" height="11" fill="#a87838" /><rect x="3.5" y="211.5" width="9" height="8" fill="#d8e8f8" /><rect x="3.5" y="216" width="9" height="3.5" fill="#50a040" /><rect x="18" y="210" width="12" height="11" fill="#a87838" /><rect x="19.5" y="211.5" width="9" height="8" fill="#2a60c0" /><rect x="19.5" y="216" width="9" height="3.5" fill="#e0a050" /><rect x="34" y="210" width="12" height="11" fill="#a87838" /><rect x="35.5" y="211.5" width="9" height="8" fill="#3070c0" /><rect x="35.5" y="216" width="9" height="3.5" fill="#e04030" /><rect x="49" y="210" width="14" height="12" fill="#c89858" rx="2"/><rect x="65" y="210" width="14" height="12" fill="#c89858" rx="2"/><text x="50" y="219.5" font-family="Liberation Sans" font-weight="bold" font-size="6.3" fill="#6a4018" textLength="12">INN</text><text x="66" y="219.5" font-family="Liberation Sans" font-weight="bold" font-size="6.3" fill="#6a4018" textLength="12">PUB</text><rect x="86.5" y="209" width="3" height="14" fill="#e0d458" /><rect x="82" y="213" width="12" height="3" fill="#e0d458" /><ellipse cx="88" cy="209.5" rx="2" ry="1.5" fill="#f0e470" /><ellipse cx="88" cy="222.5" rx="2" ry="1.5" fill="#f0e470" /><rect x="2" y="226" width="12" height="13" fill="#a8a8a8" rx="2"/><rect x="3.5" y="228" width="4" height="4" fill="#f0f0f0" /><rect x="8.5" y="228" width="4" height="4" fill="#f0f0f0" /><rect x="3.5" y="233" width="4" height="4" fill="#f0f0f0" /><rect x="8.5" y="233" width="4" height="4" fill="#f0f0f0" /><rect x="18" y="227" width="12" height="11" fill="#b08850" /><rect x="19" y="229" width="10" height="1" fill="#7a5028" /><rect x="19" y="233" width="10" height="1" fill="#7a5028" /><rect x="23.5" y="228" width="1" height="9" fill="#7a5028" /><rect x="33" y="225" width="14" height="14" fill="#d8c8a0" /><path d="M35 238L38 227H42L45 238Z" fill="#3a1a08" /><rect x="35" y="225" width="2" height="13" fill="#f0f0f0" /><rect x="43" y="225" width="2" height="13" fill="#f0f0f0" /><path d="M50 236Q49 231 52 229L54 227Q56 225 58 227L60 229Q63 231 62 236L60 240H52Z" fill="#6e9088" /><ellipse cx="56" cy="228.5" rx="3" ry="2.6" fill="#9ac0b8" /><rect x="53" y="230" width="1.5" height="5" fill="#d8c060" /><rect x="58" y="230" width="1.5" height="5" fill="#d8c060" /><rect x="54.5" y="238" width="3" height="5" fill="#b89038" /><path d="M51 246L52 243H60L61 246Z" fill="#9a9aa4" /><path d="M68 240Q67 233 69 230Q70 227 72 227Q74 227 75 230Q77 233 76 240L77 244H67Z" fill="#a09eac" /><ellipse cx="72" cy="228.5" rx="2.5" ry="2.5" fill="#b4b2c0" /><path d="M66 246L67 243H77L78 246Z" fill="#8a8896" /><rect x="84" y="227" width="9" height="28" fill="#a09eaa" /><rect x="82" y="225" width="13" height="4" fill="#8e8c98" /><rect x="82" y="250" width="13" height="6" fill="#8e8c98" /><rect x="2" y="241" width="12" height="14" fill="#c8c0b0" rx="4"/><rect x="4" y="244" width="3.5" height="4" fill="#e8d040" /><rect x="8" y="244" width="3.5" height="4" fill="#70a0e0" /><rect x="4" y="249" width="3.5" height="4" fill="#e070a0" /><rect x="8" y="249" width="3.5" height="4" fill="#60c060" /><rect x="19" y="241" width="2" height="15" fill="#b08848" /><rect x="27" y="241" width="2" height="15" fill="#b08848" /><rect x="19" y="244" width="10" height="1.6" fill="#c09858" /><rect x="19" y="249" width="10" height="1.6" fill="#c09858" /><rect x="19" y="253" width="10" height="1.6" fill="#c09858" /><rect x="33" y="240" width="14" height="35" fill="#3e1e0a" /><rect x="1" y="258" width="14" height="12" fill="#808088" rx="3"/><rect x="3" y="260" width="10" height="1" fill="#5a5a62" /><rect x="3" y="263" width="10" height="1" fill="#5a5a62" /><rect x="3" y="266" width="10" height="1" fill="#5a5a62" /><rect x="23.3" y="256" width="1.4" height="10" fill="#a07a40" /><rect x="49" y="256" width="46" height="32" fill="#c8a060" /><rect x="50" y="258" width="13" height="13" fill="#a88040" /><rect x="51" y="259" width="11" height="3" fill="#40a040" /><rect x="51" y="265" width="11" height="3" fill="#3070d0" /><rect x="66" y="258" width="13" height="13" fill="#a88040" /><rect x="67" y="260" width="11" height="1" fill="#705020" /><rect x="67" y="264" width="11" height="1" fill="#705020" /><rect x="67" y="268" width="11" height="1" fill="#705020" /><rect x="82" y="258" width="13" height="13" fill="#b89050" /><rect x="88.3" y="259" width="0.8" height="11" fill="#705020" /><rect x="50" y="273" width="13" height="13" fill="#a88040" /><rect x="51" y="275" width="11" height="3" fill="#e0d060" /><rect x="66" y="273" width="13" height="13" fill="#b08848" /><rect x="82" y="273" width="13" height="13" fill="#b08848" /><rect x="48" y="287" width="48" height="1.5" fill="#806030" /><rect x="1" y="273" width="14" height="17" fill="#c8a060" /><rect x="1" y="273" width="14" height="1" fill="#a88040" /><ellipse cx="24" cy="281" rx="6" ry="6.5" fill="#a87838" /><rect x="18.5" y="277" width="11" height="1.2" fill="#9090a0" /><rect x="18.5" y="284" width="11" height="1.2" fill="#9090a0" /><rect x="33" y="275" width="14" height="13" fill="#5a2a10" /><rect x="33" y="276" width="14" height="0.8" fill="#c03070" opacity=".6"/><rect x="33" y="278" width="14" height="0.8" fill="#c03070" opacity=".6"/><rect x="33" y="280" width="14" height="0.8" fill="#c03070" opacity=".6"/><rect x="33" y="282" width="14" height="0.8" fill="#c03070" opacity=".6"/><rect x="33" y="284" width="14" height="0.8" fill="#c03070" opacity=".6"/><rect x="33" y="286" width="14" height="0.8" fill="#c03070" opacity=".6"/><rect x="33" y="285" width="14" height="5" fill="#c8a060" /></svg><div class="a" style="left:0px;top:48px;width:141px;height:1px;background:#c8c8c8"></div><div class="a" style="left:141px;top:47px;width:1139px;height:1px;background:#b4b4b4"></div><div class="a" style="left:0px;top:67px;width:141px;height:1px;background:#a8a8a8"></div><div class="a" style="left:129px;top:68px;width:12px;height:388px;background:#f0f0f0"></div><svg class="a" style="left:132px;top:73px" width="6" height="4"><path d="M0.5 3.5H5.5L3 0.5Z" fill="#333"/></svg><div class="a" style="left:130px;top:81px;width:10px;height:273px;background:linear-gradient(90deg,#f4f4f4,#e6e6e6 50%,#d8d8d8);border:1px solid #bcbcbc;border-radius:1.5px"></div><div class="a" style="left:132px;top:215px;width:6px;height:1px;background:#888"></div><div class="a" style="left:132px;top:217px;width:6px;height:1px;background:#888"></div><div class="a" style="left:132px;top:219px;width:6px;height:1px;background:#888"></div><svg class="a" style="left:132px;top:449px" width="6" height="4"><path d="M0.5 0.5H5.5L3 3.5Z" fill="#333"/></svg><div class="a" style="left:0px;top:456px;width:141px;height:4px;background:#f0f0f0;border-bottom:1px solid #a8a8a8"></div><div class="a" style="left:4px;top:463px;width:6px;height:7px;border:1px solid #909090;background:#fff"></div><div class="a" style="left:6px;top:466px;width:3px;height:1px;background:#333"></div><div class="a" style="left:10px;top:466px;width:4px;height:1px;border-top:1px dotted #aaa"></div><svg class="a" style="left:14px;top:461px" width="11" height="9"><path d="M0.5 1.5H4L5 2.5H10.5V8.5H0.5Z" fill="#f4e890" stroke="#a89040" stroke-width=".8"/><path d="M0.5 3.5H10.5" stroke="#d0c060" stroke-width=".6"/></svg><div class="t" style="left:28px;top:461.5px;font-size:9.2px;color:#1e2040">Untitled</div><div class="a" style="left:19px;top:470px;width:1px;height:6px;border-left:1px dotted #aaa"></div><div class="a" style="left:19px;top:476px;width:8px;height:1px;border-top:1px dotted #aaa"></div><div class="a" style="left:40px;top:471px;width:40px;height:10px;background:#ececec"></div><svg class="a" style="left:27px;top:472px" width="10" height="8"><rect x="0.5" y="0.5" width="9" height="7" rx="1" fill="#80d890" stroke="#40a060" stroke-width=".9"/><rect x="1.5" y="1.5" width="7" height="2.5" fill="#b8f0c0"/></svg><div class="t" style="left:40.5px;top:472px;font-size:9.2px;color:#1e2040">MAP0001</div><div class="a" style="left:141px;top:48px;width:3px;height:632px;background:#f0f0f0"></div><div class="a" style="left:143.3px;top:48px;width:0.8999999999999773px;height:632px;background:#8a8a8a"></div><div class="a" style="left:1267px;top:48px;width:13px;height:632px;background:#f0f0f0"></div><svg class="a" style="left:1270.5px;top:53px" width="6" height="4"><path d="M0.5 3.5H5.5L3 0.5Z" fill="#333"/></svg><div class="a" style="left:1268px;top:80px;width:10px;height:161px;background:linear-gradient(90deg,#f4f4f4,#e4e4e4 50%,#d6d6d6);border:1px solid #bcbcbc;border-radius:1.5px"></div><div class="a" style="left:1270px;top:161px;width:6px;height:1px;background:#888"></div><div class="a" style="left:1270px;top:163px;width:6px;height:1px;background:#888"></div><div class="a" style="left:1270px;top:165px;width:6px;height:1px;background:#888"></div><svg class="a" style="left:1270.5px;top:660px" width="6" height="4"><path d="M0.5 0.5H5.5L3 3.5Z" fill="#333"/></svg><div class="a" style="left:144px;top:667px;width:1123px;height:13px;background:#f0f0f0"></div><div class="a" style="left:145px;top:668px;width:12px;height:11px;background:#f4f4f4"></div><svg class="a" style="left:148px;top:671px" width="4" height="6"><path d="M3.5 0.5V5.5L0.5 3Z" fill="#333"/></svg><div class="a" style="left:156px;top:668px;width:578px;height:10px;background:linear-gradient(#f4f4f4,#e4e4e4 50%,#d6d6d6);border:1px solid #bcbcbc;border-radius:1.5px"></div><div class="a" style="left:443px;top:671px;width:1px;height:5px;background:#888"></div><div class="a" style="left:445px;top:671px;width:1px;height:5px;background:#888"></div><div class="a" style="left:447px;top:671px;width:1px;height:5px;background:#888"></div><svg class="a" style="left:1260px;top:671px" width="4" height="6"><path d="M0.5 0.5V5.5L3.5 3Z" fill="#333"/></svg><div class="a" style="left:0px;top:680px;width:1280px;height:2px;border-top:1px solid #d0d0d0;border-bottom:1px solid #fafafa"></div><div class="a" style="left:214px;top:682px;width:95px;height:11px;border-left:1px solid #c8c8c8"></div><div class="a" style="left:310px;top:682px;width:970px;height:11px;border-left:1px solid #c8c8c8"></div><div class="a" style="left:1209px;top:0px;width:69px;height:11px;border:1px solid #b8a888;border-top:none;border-radius:0 0 4px 4px;background:linear-gradient(#e6dcc8,#dcd0b8)"></div><div class="a" style="left:1228px;top:0px;width:1px;height:11px;background:#c0b090"></div><div class="a" style="left:1246px;top:0px;width:1px;height:11px;background:#c0b090"></div><div class="a" style="left:1215px;top:5px;width:8.5px;height:3.5px;background:#fff;border:1px solid #6a6a6a;border-radius:1.5px"></div><svg class="a" style="left:1232px;top:1px" width="9" height="9"><rect x="3" y="1" width="5.5" height="5.5" fill="#ddd" stroke="#777" stroke-width=".9"/><rect x="1" y="3" width="5.5" height="5.5" fill="#ccc" stroke="#666" stroke-width=".9"/></svg><svg class="a" style="left:1258px;top:1.5px" width="9" height="8"><path d="M1.5 1L7.5 7M7.5 1L1.5 7" stroke="#555" stroke-width="2.4"/><path d="M1.5 1L7.5 7M7.5 1L1.5 7" stroke="#fff" stroke-width="1.2"/></svg><svg class="a" style="left:1px;top:1.5px" width="10" height="11.5" viewBox="0 0 10 11.5"><path d="M1 11V9.6L2.5 8.5L4 5.8L2.4 6.6L1 5.8L3 2.6L4.2 1.2H6.5Q9 2 9 5.5Q9 8 8.2 9.2L9 9.6V11Z" fill="#9a9a9a" stroke="#2e2e2e" stroke-width=".9"/><path d="M4.6 2.6Q7 2.6 7.2 5.5" stroke="#e8e8e8" stroke-width=".9" fill="none"/><ellipse cx="4.8" cy="10" rx="2.5" ry=".8" fill="#f0f0f0"/><circle cx="6.2" cy="2.6" r=".7" fill="#fff"/></svg><div class="a" style="left:254.2px;top:158.6px;width:15.0px;height:15.0px;background:#20a010;border:1px solid #e8f0c8"></div><svg class="a" style="left:255.2px;top:159.6px" width="13" height="13" viewBox="0 0 13 13"><path d="M2.5 5L3 1.5L6 0.5L10 1.5L10.5 5L9 3.5H4Z" fill="#a85020"/><ellipse cx="6.5" cy="5" rx="3" ry="2.6" fill="#f0c8a0"/><rect x="4.5" y="4.5" width="1" height="1.2" fill="#3a5ab0"/><rect x="7.5" y="4.5" width="1" height="1.2" fill="#3a5ab0"/><path d="M2 8H11V12H2Z" fill="#3060c8"/><rect x="5" y="8" width="3" height="3" fill="#f0f0f8"/><rect x="3" y="11" width="7" height="2" fill="#f4f4f4"/><rect x="1.5" y="8.5" width="1.5" height="3" fill="#e0a070"/><rect x="10" y="8.5" width="1.5" height="3" fill="#e0a070"/></svg><div class="a" style="left:232.9px;top:180.1px;width:15.0px;height:15.0px;background:#20a010;border:1px solid #e8f0c8"></div><svg class="a" style="left:233.9px;top:181.1px" width="13" height="13" viewBox="0 0 13 13"><path d="M2 6L2.5 1.5L6 0.5L10.5 2L11 6L9 4H4Z" fill="#3a70e0"/><ellipse cx="6.5" cy="6" rx="2.8" ry="2.4" fill="#f0c8a0"/><rect x="4" y="0.5" width="4" height="1.5" fill="#e8e8f8"/><path d="M2 9H11V13H2Z" fill="#d02828"/><rect x="5" y="9" width="3" height="2.5" fill="#f8f0f0"/><rect x="1" y="9" width="1.5" height="3" fill="#e8e8f0"/><rect x="10.5" y="9" width="1.5" height="3" fill="#e8e8f0"/></svg><div class="a" style="left:275.5px;top:180.1px;width:15.0px;height:15.0px;background:#20a010;border:1px solid #e8f0c8"></div><svg class="a" style="left:276.5px;top:181.1px" width="13" height="13" viewBox="0 0 13 13"><path d="M2 5L3 1L6.5 0.5L10 1L11 5Z" fill="#d02828"/><rect x="4" y="2" width="5" height="2" fill="#f0f0f0"/><path d="M1 1L2.5 3M12 1L10.5 3" stroke="#8a5020" stroke-width="1"/><ellipse cx="6.5" cy="6" rx="2.8" ry="2.2" fill="#e8b890"/><path d="M1 8.5H12V13H1Z" fill="#e8e8f0"/><rect x="4" y="9" width="5" height="3" fill="#c02020"/><rect x="1" y="9" width="2" height="3" fill="#d03030"/><rect x="10" y="9" width="2" height="3" fill="#d03030"/><rect x="5" y="12" width="3" height="1" fill="#5a3020"/></svg><div class="a" style="left:305px;top:135px;width:670px;height:423px;border-radius:6px 6px 4px 4px;background:linear-gradient(90deg,#dcc09a 0%,#e0c6a4 7%,#c99f6e 13%,#dcc098 19%,#d4ac78 28%,#d9b27e 55%,#cda26a 70%,#d6ae7a 84%,#e6ccaa 93%,#ddc09a 100%);border:1px solid #7a6448;box-shadow:0 0 3px rgba(0,0,30,.5)"></div><div class="t" style="left:311px;top:140.2px;font-size:7.9px;color:#3a3030">Database</div><div class="a" style="left:939px;top:135px;width:31px;height:12px;border-radius:0 0 3px 3px;background:linear-gradient(#e6b0a0,#d88068 40%,#c8401c 55%,#d05a38 80%,#e09070);border:1px solid #8a4a3a;border-top:none"></div><svg class="a" style="left:950.5px;top:137px" width="8" height="8"><path d="M1.3 1.3L6.7 6.7M6.7 1.3L1.3 6.7" stroke="#6a4a40" stroke-width="2.4"/><path d="M1.3 1.3L6.7 6.7M6.7 1.3L1.3 6.7" stroke="#f6f0f0" stroke-width="1.3"/></svg><div class="a" style="left:309px;top:153px;width:662px;height:401px;background:#f0f0f0;border:1px solid #8a8078"></div><div class="a" style="left:316px;top:161px;width:650px;height:12px;border-top:1px solid #f8f8f8"></div><div class="t" style="left:317px;width:146.60000000000002px;top:164px;text-align:center;font-size:9.1px">Terms</div><div class="a" style="left:463px;top:161px;width:2px;height:12px;border-left:1px solid #8c8c8c;border-right:1px solid #fff"></div><div class="t" style="left:463.6px;width:151.79999999999995px;top:164px;text-align:center;font-size:9.1px">System</div><div class="a" style="left:614px;top:161px;width:2px;height:12px;border-left:1px solid #8c8c8c;border-right:1px solid #fff"></div><div class="t" style="left:615.4px;width:160.20000000000005px;top:164px;text-align:center;font-size:9.1px">System 2</div><div class="a" style="left:775px;top:161px;width:2px;height:12px;border-left:1px solid #8c8c8c;border-right:1px solid #fff"></div><div class="t" style="left:775.6px;width:189.0px;top:164px;text-align:center;font-size:9.1px">Common Events</div><div class="a" style="left:964px;top:161px;width:2px;height:12px;border-left:1px solid #8c8c8c;border-right:1px solid #fff"></div><div class="t" style="left:317px;width:41.5px;top:176px;text-align:center;font-size:9.1px">Actors</div><div class="a" style="left:358px;top:174px;width:2px;height:12px;border-left:1px solid #8c8c8c;border-right:1px solid #fff"></div><div class="t" style="left:358.5px;width:47.10000000000002px;top:176px;text-align:center;font-size:9.1px">Classes</div><div class="a" style="left:405px;top:174px;width:2px;height:12px;border-left:1px solid #8c8c8c;border-right:1px solid #fff"></div><div class="t" style="left:405.6px;width:39.0px;top:176px;text-align:center;font-size:9.1px">Skills</div><div class="a" style="left:444px;top:174px;width:2px;height:12px;border-left:1px solid #8c8c8c;border-right:1px solid #fff"></div><div class="t" style="left:444.6px;width:39.599999999999966px;top:176px;text-align:center;font-size:9.1px">Items</div><div class="a" style="left:483px;top:174px;width:2px;height:12px;border-left:1px solid #8c8c8c;border-right:1px solid #fff"></div><div class="t" style="left:484.2px;width:50.19999999999999px;top:176px;text-align:center;font-size:9.1px">Enemies</div><div class="a" style="left:533px;top:174px;width:2px;height:12px;border-left:1px solid #8c8c8c;border-right:1px solid #fff"></div><div class="t" style="left:534.4px;width:44.5px;top:176px;text-align:center;font-size:9.1px">Troops</div><div class="a" style="left:578px;top:174px;width:2px;height:12px;border-left:1px solid #8c8c8c;border-right:1px solid #fff"></div><div class="t" style="left:578.9px;width:53.30000000000007px;top:176px;text-align:center;font-size:9.1px">Elements</div><div class="a" style="left:631px;top:174px;width:2px;height:12px;border-left:1px solid #8c8c8c;border-right:1px solid #fff"></div><div class="t" style="left:632.2px;width:41.799999999999955px;top:176px;text-align:center;font-size:9.1px">States</div><div class="a" style="left:673px;top:174px;width:2px;height:12px;border-left:1px solid #8c8c8c;border-right:1px solid #fff"></div><div class="t" style="left:674px;width:60.799999999999955px;top:176px;text-align:center;font-size:9.1px">Animations</div><div class="a" style="left:734px;top:174px;width:2px;height:12px;border-left:1px solid #8c8c8c;border-right:1px solid #fff"></div><div class="t" style="left:734.8px;width:68.90000000000009px;top:176px;text-align:center;font-size:9.1px">Animations 2</div><div class="a" style="left:803px;top:174px;width:2px;height:12px;border-left:1px solid #8c8c8c;border-right:1px solid #fff"></div><div class="t" style="left:803.7px;width:70.09999999999991px;top:176px;text-align:center;font-size:9.1px">Battle Screen</div><div class="a" style="left:873px;top:174px;width:2px;height:12px;border-left:1px solid #8c8c8c;border-right:1px solid #fff"></div><div class="t" style="left:873.8px;width:44.30000000000007px;top:176px;text-align:center;font-size:9.1px">Terrain</div><div class="a" style="left:917px;top:174px;width:2px;height:12px;border-left:1px solid #8c8c8c;border-right:1px solid #fff"></div><div class="t" style="left:918.1px;width:46.5px;top:176px;text-align:center;font-size:9.1px">Tilesets</div><div class="a" style="left:964px;top:174px;width:2px;height:12px;border-left:1px solid #8c8c8c;border-right:1px solid #fff"></div><div class="a" style="left:317px;top:174px;width:40px;height:11px;border:1px dashed #777"></div><div class="a" style="left:315px;top:186px;width:652px;height:336px;border-top:1px solid #f8f8f8;border-left:1px solid #fafafa;box-shadow:inset -1px -1px 0 #8a8a8a,inset -2px -2px 0 #b0b0b0"></div><div class="a" style="left:324px;top:194px;width:85px;height:13px;background:#000"></div><div class="t" style="left:324px;width:85px;top:195px;text-align:center;font-size:12.2px;color:#fff">Actors</div><div class="a" style="left:324px;top:209px;width:84px;height:263px;background:#fff;border-top:1px solid #a0a0a0;border-left:1px solid #a0a0a0;box-shadow:inset 1px 1px 0 #696969"></div><div class="a" style="left:325.5px;top:210.3px;width:82.0px;height:9.5px;background:#3399ff"></div><div class="t" style="left:326.6px;top:211.0px;font-size:9.3px;color:#fff">0001:Zack</div><div class="t" style="left:326.6px;top:220.33px;font-size:9.3px;color:#262630">0002:Albert</div><div class="t" style="left:326.6px;top:229.66px;font-size:9.3px;color:#262630">0003:Vance</div><div class="t" style="left:326.6px;top:238.99px;font-size:9.3px;color:#262630">0004:Craise</div><div class="t" style="left:326.6px;top:248.32px;font-size:9.3px;color:#262630">0005:Arthur</div><div class="t" style="left:326.6px;top:257.65px;font-size:9.3px;color:#262630">0006:Ardis</div><div class="t" style="left:326.6px;top:266.98px;font-size:9.3px;color:#262630">0007:Fey-Lin</div><div class="t" style="left:326.6px;top:276.31px;font-size:9.3px;color:#262630">0008:Alyssa</div><div class="t" style="left:326.6px;top:285.64px;font-size:9.3px;color:#262630">0009:Mia</div><div class="t" style="left:326.6px;top:294.97px;font-size:9.3px;color:#262630">0010:Elaine</div><div class="t" style="left:326.6px;top:304.3px;font-size:9.3px;color:#262630">0011:Cynthia</div><div class="t" style="left:326.6px;top:313.63px;font-size:9.3px;color:#262630">0012:Melissa</div><div class="t" style="left:326.6px;top:322.96000000000004px;font-size:9.3px;color:#262630">0013:Fiona</div><div class="t" style="left:326.6px;top:332.29px;font-size:9.3px;color:#262630">0014:Mao</div><div class="a" style="left:324px;top:488px;width:85px;height:16px;background:#f0f0f0;box-shadow:inset -1px -1px 0 #696969,inset 1px 1px 0 #fff,inset -2px -2px 0 #a0a0a0"></div><div class="t" style="left:323.6px;width:85.39999999999998px;top:491.3px;text-align:center;font-size:8.6px;">Maximum Number</div><div class="a" style="left:415px;top:200px;width:551px;height:308px;border-top:1px solid #a0a0a0;border-left:1px solid #a0a0a0;box-shadow:inset 1px 1px 0 #696969"></div><div class="a" style="left:421px;top:210px;width:102px;height:22px;border:1px solid #a8a8a8;box-shadow:inset 1px 1px 0 #fff,1px 1px 0 #fff"></div><div class="t" style="left:426.4px;top:206.5px;background:#f0f0f0;padding:0 1.5px;font-size:8px;letter-spacing:.2px">Name</div><div class="a" style="left:427px;top:216px;width:85px;height:14px;background:#fff;border-top:1px solid #a8a8a8;border-left:1px solid #a8a8a8;box-shadow:inset 1px 1px 0 #7a7a7a;border-bottom:1px solid #f8f8f8;border-right:1px solid #f8f8f8"></div><div class="t" style="left:429.8px;top:219.15px;font-size:8.6px">Zack</div><div class="a" style="left:421px;top:243px;width:102px;height:21px;border:1px solid #a8a8a8;box-shadow:inset 1px 1px 0 #fff,1px 1px 0 #fff"></div><div class="t" style="left:426.4px;top:238.6px;background:#f0f0f0;padding:0 1.5px;font-size:8px;letter-spacing:.2px">Nickname</div><div class="a" style="left:427px;top:248px;width:85px;height:12px;background:#fff;border-top:1px solid #a8a8a8;border-left:1px solid #a8a8a8;box-shadow:inset 1px 1px 0 #7a7a7a;border-bottom:1px solid #f8f8f8;border-right:1px solid #f8f8f8"></div><div class="t" style="left:429.8px;top:250.25px;font-size:8.6px">None</div><div class="a" style="left:525px;top:210px;width:65px;height:22px;border:1px solid #a8a8a8;box-shadow:inset 1px 1px 0 #fff,1px 1px 0 #fff"></div><div class="t" style="left:530.3px;top:206.5px;background:#f0f0f0;padding:0 1.5px;font-size:8px;letter-spacing:.2px">Initial Level</div><div class="a" style="left:529px;top:216px;width:57px;height:13px;background:#fff;border-top:1px solid #a8a8a8;border-left:1px solid #a8a8a8;box-shadow:inset 1px 1px 0 #7a7a7a;border-bottom:1px solid #f8f8f8;border-right:1px solid #f8f8f8"></div><div class="t" style="left:531.8px;top:218.55px;font-size:8.6px">1</div><div class="a" style="left:569px;top:218px;width:10px;height:10px;background:#f0f0f0;box-shadow:inset -1px -1px 0 #808080,inset 1px 1px 0 #fff"></div><svg class="a" style="left:568.7px;top:218.4px" width="10" height="9.299999999999983"><path d="M3 4.5H7L5 1.5Z M3 6.5H7L5 9.5Z" fill="#222"/></svg><div class="a" style="left:579px;top:218px;width:6px;height:10px;background:#f0f0f0;box-shadow:inset -1px -1px 0 #808080,inset 1px 1px 0 #fff"></div><div class="a" style="left:581.2px;top:220.05px;width:2px;height:5px;border:1px solid #777;border-radius:1px"></div><div class="a" style="left:593px;top:210px;width:69px;height:22px;border:1px solid #a8a8a8;box-shadow:inset 1px 1px 0 #fff,1px 1px 0 #fff"></div><div class="t" style="left:597.7px;top:206.5px;background:#f0f0f0;padding:0 1.5px;font-size:8px;letter-spacing:.2px">Max Level</div><div class="a" style="left:596px;top:216px;width:62px;height:13px;background:#fff;border-top:1px solid #a8a8a8;border-left:1px solid #a8a8a8;box-shadow:inset 1px 1px 0 #7a7a7a;border-bottom:1px solid #f8f8f8;border-right:1px solid #f8f8f8"></div><div class="t" style="left:599.0px;top:218.55px;font-size:8.6px">99</div><div class="a" style="left:641px;top:218px;width:10px;height:10px;background:#f0f0f0;box-shadow:inset -1px -1px 0 #808080,inset 1px 1px 0 #fff"></div><svg class="a" style="left:640.7px;top:218.4px" width="10" height="9.299999999999983"><path d="M3 4.5H7L5 1.5Z M3 6.5H7L5 9.5Z" fill="#222"/></svg><div class="a" style="left:651px;top:218px;width:6px;height:10px;background:#f0f0f0;box-shadow:inset -1px -1px 0 #808080,inset 1px 1px 0 #fff"></div><div class="a" style="left:653.2px;top:220.05px;width:2px;height:5px;border:1px solid #777;border-radius:1px"></div><div class="a" style="left:525px;top:243px;width:137px;height:21px;border:1px solid #a8a8a8;box-shadow:inset 1px 1px 0 #fff,1px 1px 0 #fff"></div><div class="t" style="left:530.3px;top:238.8px;background:#f0f0f0;padding:0 1.5px;font-size:8px;letter-spacing:.2px">Critical Rate</div><div class="a" style="left:531px;top:250px;width:7px;height:7px;background:#fff;border-top:1px solid #808080;border-left:1px solid #808080;border-bottom:1px solid #fff;border-right:1px solid #fff;box-shadow:1px 1px 0 #e0e0e0"></div><svg class="a" style="left:531px;top:250.4px" width="7" height="7"><path d="M1.2 3.2L2.8 5L6 1.5" stroke="#000" stroke-width="1.3" fill="none"/></svg><div class="t" style="left:543.4px;top:250px;font-size:8.6px">One in</div><div class="a" style="left:572px;top:248px;width:36px;height:13px;background:#fff;border-top:1px solid #a8a8a8;border-left:1px solid #a8a8a8;box-shadow:inset 1px 1px 0 #7a7a7a;border-bottom:1px solid #f8f8f8;border-right:1px solid #f8f8f8"></div><div class="t" style="left:574.4px;top:250.35px;font-size:8.6px">30</div><div class="a" style="left:590px;top:250px;width:10px;height:10px;background:#f0f0f0;box-shadow:inset -1px -1px 0 #808080,inset 1px 1px 0 #fff"></div><svg class="a" style="left:590.5px;top:250px" width="10" height="9.699999999999989"><path d="M3 4.5H7L5 1.5Z M3 6.5H7L5 9.5Z" fill="#222"/></svg><div class="a" style="left:600px;top:250px;width:7px;height:10px;background:#f0f0f0;box-shadow:inset -1px -1px 0 #808080,inset 1px 1px 0 #fff"></div><div class="a" style="left:603.0px;top:251.85px;width:2px;height:5px;border:1px solid #777;border-radius:1px"></div><div class="a" style="left:422px;top:274px;width:109px;height:198px;border:1px solid #a8a8a8;box-shadow:inset 1px 1px 0 #fff,1px 1px 0 #fff"></div><div class="t" style="left:426.5px;top:270.5px;background:#f0f0f0;padding:0 1.5px;font-size:8px;letter-spacing:.2px">Graphic</div><svg class="a" style="left:427.5px;top:281.3px" width="59.3" height="59" viewBox="0 0 60 60" preserveAspectRatio="none"><rect width="60" height="60" fill="#8ed0f2"/><path d="M2 48L8 34L20 14L50 12L60 30V44L52 54L44 60H6Z" fill="#e39562"/><path d="M20 16L48 14L56 30L54 44L46 54L36 59L26 54L22 40Z" fill="#f6d4b6"/><path d="M22 40L26 54L36 59H24L14 50Z" fill="#d98452"/><path d="M14 60L24 52L36 59L34 60Z" fill="#3a2020" opacity=".5"/><path d="M0 0H60V36L57 24L54 38L51 18L46 28L44 12L38 22L34 8L28 18L26 10L20 24L18 50L14 36L12 58L8 40L4 60H0Z" fill="#5450cc"/><path d="M8 4L12 30L14 6Z M30 2L36 16L38 3Z M46 3L52 20L54 4Z M20 2L24 14L26 3Z" fill="#7070dc"/><path d="M2 6L6 40L5 8Z M16 4L19 22L20 5Z M40 3L44 18L43 4Z" fill="#3a38a8"/><path d="M56 44L60 38V60H50Z" fill="#8ed0f2"/><path d="M54 38L58 30L60 44L56 56Z" fill="#5450cc"/><path d="M0 44L4 40L2 60H0Z" fill="#c8d8e8"/><path d="M25 19L38 16L42 22" stroke="#2a1a1a" stroke-width="1.6" fill="none"/><ellipse cx="32" cy="23.8" rx="4.2" ry="2.3" fill="#f0e4e0"/><circle cx="33" cy="23.8" r="2.1" fill="#b82020"/><circle cx="33.4" cy="23.5" r=".8" fill="#401010"/><path d="M44 26L55 23" stroke="#2a1a1a" stroke-width="1.6"/><ellipse cx="50" cy="29.2" rx="3.4" ry="2" fill="#f0e4e0"/><circle cx="50.5" cy="29.2" r="1.8" fill="#b82020"/><circle cx="50.8" cy="29" r=".7" fill="#401010"/><path d="M42 28L40 38L44 40" stroke="#9a5a3a" stroke-width="1" fill="none"/><path d="M32 45Q36 44 40 46" stroke="#b07050" stroke-width="1" fill="none"/><path d="M16 40Q20 52 30 58" stroke="#3a2020" stroke-width="1" fill="none"/></svg><div class="t" style="left:490.8px;top:282px;font-size:8.4px">Face</div><div class="a" style="left:491px;top:325px;width:30px;height:17px;background:#f0f0f0;box-shadow:inset -1px -1px 0 #696969,inset 1px 1px 0 #fff,inset -2px -2px 0 #a0a0a0"></div><div class="t" style="left:490.8px;width:30.19999999999999px;top:328.75px;text-align:center;font-size:8.6px;"><u>S</u>et</div><div class="a" style="left:426px;top:348px;width:100px;height:1px;border-top:1px solid #a8a8a8;border-bottom:1px solid #fff"></div><svg class="a" style="left:427.4px;top:358px" width="38" height="43" viewBox="0 0 38 43"><rect width="38" height="43" fill="#1e9c0c"/><rect width="38" height="1" fill="#555"/><rect width="1" height="43" fill="#555"/><path d="M10 26L11 29H28L29 26L28 34H11Z" fill="#7a3818"/><rect x="14" y="34" width="11" height="5" fill="#8ad040"/><rect x="13" y="38" width="4" height="3" fill="#803020"/><rect x="21" y="38" width="4" height="3" fill="#803020"/><rect x="11" y="26" width="16" height="8" fill="#a85a28"/><rect x="16" y="27" width="6" height="5" fill="#f0f0f0"/><ellipse cx="19" cy="22.5" rx="5" ry="4.5" fill="#f2c8a0"/><path d="M9 16L12 11L14 14L17 8L20 12L24 8L25 13L28 13L27 20L25 18L23 23L21 18L17 19L15 24L12 20Z" fill="#5a62d8"/><path d="M14 13L17 10L19 14Z" fill="#9aa0f0"/><rect x="16" y="22" width="1.2" height="2" fill="#a02020"/><rect x="21" y="22" width="1.2" height="2" fill="#a02020"/></svg><div class="t" style="left:469px;top:358.5px;font-size:8.4px">Charset</div><div class="a" style="left:469px;top:369px;width:7px;height:7px;background:#fff;border-top:1px solid #808080;border-left:1px solid #808080;border-bottom:1px solid #fff;border-right:1px solid #fff;box-shadow:1px 1px 0 #e0e0e0"></div><div class="t" style="left:481px;top:369px;font-size:8.4px">Transparent</div><div class="a" style="left:491px;top:385px;width:30px;height:17px;background:#f0f0f0;box-shadow:inset -1px -1px 0 #696969,inset 1px 1px 0 #fff,inset -2px -2px 0 #a0a0a0"></div><div class="t" style="left:491px;width:30px;top:389.25px;text-align:center;font-size:8.6px;"><u>S</u>et</div><div class="a" style="left:426px;top:407px;width:100px;height:1px;border-top:1px solid #a8a8a8;border-bottom:1px solid #fff"></div><svg class="a" style="left:427.3px;top:415.1px" width="32.7" height="32.4" viewBox="0 0 33 32.4"><rect width="33" height="32.4" fill="#78a6a6"/><rect width="33" height="1" fill="#707070"/><rect width="1" height="32.4" fill="#707070"/><rect x="12" y="21" width="11" height="6" fill="#3a9a48"/><rect x="11" y="27" width="5" height="2" fill="#5a3020"/><rect x="19" y="27" width="5" height="2" fill="#5a3020"/><ellipse cx="13" cy="29.5" rx="3" ry="1.6" fill="#e8f0f8"/><ellipse cx="23" cy="29.5" rx="3" ry="1.6" fill="#e8f0f8"/><rect x="11" y="15" width="13" height="6.5" fill="#7a4020"/><rect x="15" y="15.5" width="5" height="5" fill="#e8e8f0"/><ellipse cx="8.5" cy="18" rx="2.5" ry="1.8" fill="#e0a070"/><ellipse cx="25.5" cy="18" rx="2" ry="2" fill="#e0a070"/><ellipse cx="17" cy="12" rx="4.5" ry="3.8" fill="#f2c8a0"/><circle cx="15.5" cy="13.5" r=".9" fill="#c03030"/><path d="M7 3L13 5L16 1L18 5L24 3L22 7L25 9L21 10L19 8L17 11L14 9L12 12L10 8L8 9L10 6Z" fill="#4a70d8"/></svg><div class="t" style="left:469px;top:416px;font-size:8.4px">Animations</div><div class="a" style="left:426px;top:453px;width:93px;height:13px;background:#fff;border-top:1px solid #a8a8a8;border-left:1px solid #a8a8a8;box-shadow:inset 1px 1px 0 #7a7a7a;border-bottom:1px solid #f8f8f8;border-right:1px solid #f8f8f8"></div><div class="t" style="left:429.1px;top:455.7px;font-size:8.6px">Male 2</div><div class="a" style="left:508px;top:455px;width:10px;height:10px;background:#f0f0f0;box-shadow:inset -1px -1px 0 #696969,inset 1px 1px 0 #fff,inset -2px -2px 0 #a0a0a0"></div><svg class="a" style="left:510.0px;top:458.2px" width="6" height="4"><path d="M0.5 0.5H5.5L3 3.5Z" fill="#000"/></svg><div class="a" style="left:535px;top:274px;width:127px;height:22px;border:1px solid #a8a8a8;box-shadow:inset 1px 1px 0 #fff,1px 1px 0 #fff"></div><div class="t" style="left:539.75px;top:270.4px;background:#f0f0f0;padding:0 1.5px;font-size:8px;letter-spacing:.2px">Class</div><div class="a" style="left:539px;top:281px;width:77px;height:11px;background:#fff;border-top:1px solid #a8a8a8;border-left:1px solid #a8a8a8;box-shadow:inset 1px 1px 0 #7a7a7a;border-bottom:1px solid #f8f8f8;border-right:1px solid #f8f8f8"></div><div class="t" style="left:541.8px;top:282.55px;font-size:8.6px">(None)</div><div class="a" style="left:605px;top:283px;width:10px;height:9px;background:#f0f0f0;box-shadow:inset -1px -1px 0 #696969,inset 1px 1px 0 #fff,inset -2px -2px 0 #a0a0a0"></div><svg class="a" style="left:606.6px;top:285.05px" width="6" height="4"><path d="M0.5 0.5H5.5L3 3.5Z" fill="#000"/></svg><div class="a" style="left:622px;top:278px;width:37px;height:16px;background:#f0f0f0;box-shadow:inset -1px -1px 0 #696969,inset 1px 1px 0 #fff,inset -2px -2px 0 #a0a0a0"></div><div class="t" style="left:622px;width:36.75px;top:281.0px;text-align:center;font-size:8.6px;color:#a0a0a0">Apply</div><div class="a" style="left:535px;top:305px;width:143px;height:167px;border:1px solid #a8a8a8;box-shadow:inset 1px 1px 0 #fff,1px 1px 0 #fff"></div><div class="t" style="left:540px;top:300.75px;background:#f0f0f0;padding:0 1.5px;font-size:8px;letter-spacing:.2px">Parameter Curves</div><div class="a" style="left:539px;top:310px;width:66px;height:10px;background:#f0f0f0;border-top:1px solid #fff;border-left:1px solid #fff;box-shadow:inset -1px -1px 0 #c8c8c8"></div><div class="t" style="left:538.6px;width:66.0px;top:311.1px;text-align:center;font-size:8.4px">Maximum HP</div><svg class="a" style="left:539.6px;top:320.6px" width="64" height="36"><rect width="64" height="36" fill="#000"/><path d="M0,36 L0.00,33.48 L1.60,33.16 L3.20,32.66 L4.80,32.06 L6.40,31.39 L8.00,30.65 L9.60,29.86 L11.20,29.03 L12.80,28.15 L14.40,27.23 L16.00,26.27 L17.60,25.28 L19.20,24.26 L20.80,23.21 L22.40,22.13 L24.00,21.02 L25.60,19.89 L27.20,18.73 L28.80,17.55 L30.40,16.34 L32.00,15.11 L33.60,13.86 L35.20,12.59 L36.80,11.30 L38.40,9.99 L40.00,8.65 L41.60,7.30 L43.20,5.94 L44.80,4.55 L46.40,3.15 L48.00,1.73 L49.60,0.29 L51.20,0.00 L52.80,0.00 L54.40,0.00 L56.00,0.00 L57.60,0.00 L59.20,0.00 L60.80,0.00 L62.40,0.00 L64.00,0.00 L64,0 L64,36 Z" fill="#fb5a32"/></svg><div class="t" style="left:541.1px;top:323.6px;font-size:8.3px;color:#fff;letter-spacing:-.45px">Now:514</div><div class="a" style="left:609px;top:310px;width:66px;height:10px;background:#f0f0f0;border-top:1px solid #fff;border-left:1px solid #fff;box-shadow:inset -1px -1px 0 #c8c8c8"></div><div class="t" style="left:608.6px;width:66.0px;top:311.1px;text-align:center;font-size:8.4px">Maximum MP</div><svg class="a" style="left:609.6px;top:320.6px" width="64" height="36"><rect width="64" height="36" fill="#000"/><path d="M0,36 L0.00,33.48 L1.60,33.25 L3.20,32.89 L4.80,32.47 L6.40,31.98 L8.00,31.46 L9.60,30.89 L11.20,30.30 L12.80,29.67 L14.40,29.01 L16.00,28.33 L17.60,27.62 L19.20,26.89 L20.80,26.14 L22.40,25.37 L24.00,24.57 L25.60,23.76 L27.20,22.93 L28.80,22.09 L30.40,21.22 L32.00,20.35 L33.60,19.45 L35.20,18.54 L36.80,17.62 L38.40,16.68 L40.00,15.73 L41.60,14.76 L43.20,13.79 L44.80,12.79 L46.40,11.79 L48.00,10.78 L49.60,9.75 L51.20,8.71 L52.80,7.66 L54.40,6.60 L56.00,5.52 L57.60,4.44 L59.20,3.34 L60.80,2.24 L62.40,1.12 L64.00,0.00 L64,0 L64,36 Z" fill="#e852f2"/></svg><div class="t" style="left:611.1px;top:323.6px;font-size:8.3px;color:#fff;letter-spacing:-.45px">Now:43</div><div class="a" style="left:539px;top:361px;width:66px;height:10px;background:#f0f0f0;border-top:1px solid #fff;border-left:1px solid #fff;box-shadow:inset -1px -1px 0 #c8c8c8"></div><div class="t" style="left:538.6px;width:66.0px;top:362.6px;text-align:center;font-size:8.4px">Attack</div><svg class="a" style="left:539.6px;top:372.1px" width="64" height="36"><rect width="64" height="36" fill="#000"/><path d="M0,36 L0.00,33.48 L1.60,33.14 L3.20,32.61 L4.80,31.98 L6.40,31.27 L8.00,30.50 L9.60,29.67 L11.20,28.79 L12.80,27.86 L14.40,26.89 L16.00,25.88 L17.60,24.84 L19.20,23.76 L20.80,22.65 L22.40,21.51 L24.00,20.35 L25.60,19.15 L27.20,17.93 L28.80,16.68 L30.40,15.41 L32.00,14.11 L33.60,12.79 L35.20,11.45 L36.80,10.09 L38.40,8.71 L40.00,7.30 L41.60,5.88 L43.20,4.44 L44.80,2.98 L46.40,1.50 L48.00,0.00 L49.60,0.00 L51.20,0.00 L52.80,0.00 L54.40,0.00 L56.00,0.00 L57.60,0.00 L59.20,0.00 L60.80,0.00 L62.40,0.00 L64.00,0.00 L64,0 L64,36 Z" fill="#fdc214"/></svg><div class="t" style="left:541.1px;top:375.1px;font-size:8.3px;color:#fff;letter-spacing:-.45px">Now:69</div><div class="a" style="left:609px;top:361px;width:66px;height:10px;background:#f0f0f0;border-top:1px solid #fff;border-left:1px solid #fff;box-shadow:inset -1px -1px 0 #c8c8c8"></div><div class="t" style="left:608.6px;width:66.0px;top:362.6px;text-align:center;font-size:8.4px">Defense</div><svg class="a" style="left:609.6px;top:372.1px" width="64" height="36"><rect width="64" height="36" fill="#000"/><path d="M0,36 L0.00,33.48 L1.60,33.20 L3.20,32.76 L4.80,32.24 L6.40,31.65 L8.00,31.00 L9.60,30.31 L11.20,29.58 L12.80,28.81 L14.40,28.00 L16.00,27.16 L17.60,26.30 L19.20,25.40 L20.80,24.48 L22.40,23.53 L24.00,22.56 L25.60,21.57 L27.20,20.55 L28.80,19.51 L30.40,18.46 L32.00,17.38 L33.60,16.28 L35.20,15.17 L36.80,14.04 L38.40,12.89 L40.00,11.72 L41.60,10.54 L43.20,9.34 L44.80,8.12 L46.40,6.89 L48.00,5.65 L49.60,4.39 L51.20,3.11 L52.80,1.83 L54.40,0.52 L56.00,0.00 L57.60,0.00 L59.20,0.00 L60.80,0.00 L62.40,0.00 L64.00,0.00 L64,0 L64,36 Z" fill="#14d836"/></svg><div class="t" style="left:611.1px;top:375.1px;font-size:8.3px;color:#fff;letter-spacing:-.45px">Now:59</div><div class="a" style="left:539px;top:413px;width:66px;height:10px;background:#f0f0f0;border-top:1px solid #fff;border-left:1px solid #fff;box-shadow:inset -1px -1px 0 #c8c8c8"></div><div class="t" style="left:538.6px;width:66.0px;top:414.1px;text-align:center;font-size:8.4px">Mind</div><svg class="a" style="left:539.6px;top:423.6px" width="64" height="36"><rect width="64" height="36" fill="#000"/><path d="M0,36 L0.00,33.48 L1.60,33.25 L3.20,32.89 L4.80,32.47 L6.40,31.98 L8.00,31.46 L9.60,30.89 L11.20,30.30 L12.80,29.67 L14.40,29.01 L16.00,28.33 L17.60,27.62 L19.20,26.89 L20.80,26.14 L22.40,25.37 L24.00,24.57 L25.60,23.76 L27.20,22.93 L28.80,22.09 L30.40,21.22 L32.00,20.35 L33.60,19.45 L35.20,18.54 L36.80,17.62 L38.40,16.68 L40.00,15.73 L41.60,14.76 L43.20,13.79 L44.80,12.79 L46.40,11.79 L48.00,10.78 L49.60,9.75 L51.20,8.71 L52.80,7.66 L54.40,6.60 L56.00,5.52 L57.60,4.44 L59.20,3.34 L60.80,2.24 L62.40,1.12 L64.00,0.00 L64,0 L64,36 Z" fill="#5677f7"/></svg><div class="t" style="left:541.1px;top:426.6px;font-size:8.3px;color:#fff;letter-spacing:-.45px">Now:45</div><div class="a" style="left:609px;top:413px;width:66px;height:10px;background:#f0f0f0;border-top:1px solid #fff;border-left:1px solid #fff;box-shadow:inset -1px -1px 0 #c8c8c8"></div><div class="t" style="left:608.6px;width:66.0px;top:414.1px;text-align:center;font-size:8.4px">Agility</div><svg class="a" style="left:609.6px;top:423.6px" width="64" height="36"><rect width="64" height="36" fill="#000"/><path d="M0,36 L0.00,33.48 L1.60,33.25 L3.20,32.89 L4.80,32.47 L6.40,31.98 L8.00,31.46 L9.60,30.89 L11.20,30.30 L12.80,29.67 L14.40,29.01 L16.00,28.33 L17.60,27.62 L19.20,26.89 L20.80,26.14 L22.40,25.37 L24.00,24.57 L25.60,23.76 L27.20,22.93 L28.80,22.09 L30.40,21.22 L32.00,20.35 L33.60,19.45 L35.20,18.54 L36.80,17.62 L38.40,16.68 L40.00,15.73 L41.60,14.76 L43.20,13.79 L44.80,12.79 L46.40,11.79 L48.00,10.78 L49.60,9.75 L51.20,8.71 L52.80,7.66 L54.40,6.60 L56.00,5.52 L57.60,4.44 L59.20,3.34 L60.80,2.24 L62.40,1.12 L64.00,0.00 L64,0 L64,36 Z" fill="#10d8f6"/></svg><div class="t" style="left:611.1px;top:426.6px;font-size:8.3px;color:#fff;letter-spacing:-.45px">Now:43</div><div class="a" style="left:421px;top:480px;width:257px;height:21px;border:1px solid #a8a8a8;box-shadow:inset 1px 1px 0 #fff,1px 1px 0 #fff"></div><div class="t" style="left:426.4px;top:475.6px;background:#f0f0f0;padding:0 1.5px;font-size:8px;letter-spacing:.2px">Experience Curve</div><div class="a" style="left:426px;top:485px;width:190px;height:12px;border-top:1px solid #a0a0a0;border-left:1px solid #a0a0a0;border-bottom:1px solid #fff;border-right:1px solid #fff"></div><div class="t" style="left:449.5px;top:487.8px;font-size:8.4px;letter-spacing:.18px">Basic=1; Extra=677; Acceleration=40</div><div class="a" style="left:622px;top:482px;width:48px;height:16px;background:#f0f0f0;box-shadow:inset -1px -1px 0 #696969,inset 1px 1px 0 #fff,inset -2px -2px 0 #a0a0a0"></div><div class="t" style="left:621.7px;width:48.0px;top:485.5px;text-align:center;font-size:8.6px;"><u>S</u>et</div><div class="a" style="left:666px;top:210px;width:158px;height:86px;border:1px solid #a8a8a8;box-shadow:inset 1px 1px 0 #fff,1px 1px 0 #fff"></div><div class="t" style="left:670.5px;top:205.5px;background:#f0f0f0;padding:0 1.5px;font-size:8px;letter-spacing:.2px">Starting Equipment</div><div class="t" style="right:568px;top:218px;font-size:8.4px">Weapon:</div><div class="a" style="left:716px;top:216px;width:100px;height:12px;background:#fff;border-top:1px solid #a8a8a8;border-left:1px solid #a8a8a8;box-shadow:inset 1px 1px 0 #7a7a7a;border-bottom:1px solid #f8f8f8;border-right:1px solid #f8f8f8"></div><div class="t" style="left:718.4px;top:218.25px;font-size:8.6px">Club</div><div class="a" style="left:805px;top:218px;width:10px;height:10px;background:#f0f0f0;box-shadow:inset -1px -1px 0 #696969,inset 1px 1px 0 #fff,inset -2px -2px 0 #a0a0a0"></div><svg class="a" style="left:806.8px;top:220.75px" width="6" height="4"><path d="M0.5 0.5H5.5L3 3.5Z" fill="#000"/></svg><div class="t" style="right:568px;top:234.3px;font-size:8.4px">Battle:</div><div class="a" style="left:716px;top:232px;width:100px;height:13px;background:#fff;border-top:1px solid #a8a8a8;border-left:1px solid #a8a8a8;box-shadow:inset 1px 1px 0 #7a7a7a;border-bottom:1px solid #f8f8f8;border-right:1px solid #f8f8f8"></div><div class="t" style="left:718.4px;top:234.55px;font-size:8.6px">(None)</div><div class="a" style="left:805px;top:234px;width:10px;height:10px;background:#f0f0f0;box-shadow:inset -1px -1px 0 #696969,inset 1px 1px 0 #fff,inset -2px -2px 0 #a0a0a0"></div><svg class="a" style="left:806.8px;top:237.05px" width="6" height="4"><path d="M0.5 0.5H5.5L3 3.5Z" fill="#000"/></svg><div class="t" style="right:568px;top:251.2px;font-size:8.4px">Head:</div><div class="a" style="left:716px;top:249px;width:100px;height:13px;background:#fff;border-top:1px solid #a8a8a8;border-left:1px solid #a8a8a8;box-shadow:inset 1px 1px 0 #7a7a7a;border-bottom:1px solid #f8f8f8;border-right:1px solid #f8f8f8"></div><div class="t" style="left:718.4px;top:251.45px;font-size:8.6px">(None)</div><div class="a" style="left:805px;top:251px;width:10px;height:10px;background:#f0f0f0;box-shadow:inset -1px -1px 0 #696969,inset 1px 1px 0 #fff,inset -2px -2px 0 #a0a0a0"></div><svg class="a" style="left:806.8px;top:253.95px" width="6" height="4"><path d="M0.5 0.5H5.5L3 3.5Z" fill="#000"/></svg><div class="t" style="right:568px;top:267.1px;font-size:8.4px">Body:</div><div class="a" style="left:716px;top:265px;width:100px;height:13px;background:#fff;border-top:1px solid #a8a8a8;border-left:1px solid #a8a8a8;box-shadow:inset 1px 1px 0 #7a7a7a;border-bottom:1px solid #f8f8f8;border-right:1px solid #f8f8f8"></div><div class="t" style="left:718.4px;top:267.35px;font-size:8.6px">Leather Armor</div><div class="a" style="left:805px;top:267px;width:10px;height:10px;background:#f0f0f0;box-shadow:inset -1px -1px 0 #696969,inset 1px 1px 0 #fff,inset -2px -2px 0 #a0a0a0"></div><svg class="a" style="left:806.8px;top:269.85px" width="6" height="4"><path d="M0.5 0.5H5.5L3 3.5Z" fill="#000"/></svg><div class="t" style="right:568px;top:282.5px;font-size:8.4px">Accessory:</div><div class="a" style="left:716px;top:280px;width:100px;height:13px;background:#fff;border-top:1px solid #a8a8a8;border-left:1px solid #a8a8a8;box-shadow:inset 1px 1px 0 #7a7a7a;border-bottom:1px solid #f8f8f8;border-right:1px solid #f8f8f8"></div><div class="t" style="left:718.4px;top:282.75px;font-size:8.6px">(None)</div><div class="a" style="left:805px;top:282px;width:10px;height:10px;background:#f0f0f0;box-shadow:inset -1px -1px 0 #696969,inset 1px 1px 0 #fff,inset -2px -2px 0 #a0a0a0"></div><svg class="a" style="left:806.8px;top:285.25px" width="6" height="4"><path d="M0.5 0.5H5.5L3 3.5Z" fill="#000"/></svg><div class="a" style="left:683px;top:304px;width:138px;height:24px;border:1px solid #a8a8a8;box-shadow:inset 1px 1px 0 #fff,1px 1px 0 #fff"></div><div class="t" style="left:688.4px;top:300.4px;background:#f0f0f0;padding:0 1.5px;font-size:8px;letter-spacing:.2px">Barehand Animation</div><div class="a" style="left:692px;top:310px;width:123px;height:12px;background:#fff;border-top:1px solid #a8a8a8;border-left:1px solid #a8a8a8;box-shadow:inset 1px 1px 0 #7a7a7a;border-bottom:1px solid #f8f8f8;border-right:1px solid #f8f8f8"></div><div class="t" style="left:694.8px;top:311.79999999999995px;font-size:8.6px">Hit A</div><div class="a" style="left:804px;top:312px;width:10px;height:9px;background:#f0f0f0;box-shadow:inset -1px -1px 0 #696969,inset 1px 1px 0 #fff,inset -2px -2px 0 #a0a0a0"></div><svg class="a" style="left:806.0px;top:314.29999999999995px" width="6" height="4"><path d="M0.5 0.5H5.5L3 3.5Z" fill="#000"/></svg><div class="a" style="left:683px;top:338px;width:138px;height:47px;border:1px solid #a8a8a8;box-shadow:inset 1px 1px 0 #fff,1px 1px 0 #fff"></div><div class="t" style="left:688.4px;top:333.6px;background:#f0f0f0;padding:0 1.5px;font-size:8px;letter-spacing:.2px">Options</div><div class="a" style="left:688px;top:350px;width:7px;height:7px;background:#fff;border-top:1px solid #808080;border-left:1px solid #808080;border-bottom:1px solid #fff;border-right:1px solid #fff;box-shadow:1px 1px 0 #e0e0e0"></div><svg class="a" style="left:687.7px;top:349.8px" width="7" height="7"><path d="M1.2 3.2L2.8 5L6 1.5" stroke="#000" stroke-width="1.3" fill="none"/></svg><div class="t" style="left:699.5px;top:349px;font-size:8.4px">Dual Wield</div><div class="a" style="left:750px;top:350px;width:7px;height:7px;background:#fff;border-top:1px solid #808080;border-left:1px solid #808080;border-bottom:1px solid #fff;border-right:1px solid #fff;box-shadow:1px 1px 0 #e0e0e0"></div><div class="t" style="left:761.3px;top:349px;font-size:8.4px">Autobattle</div><div class="a" style="left:688px;top:365px;width:7px;height:7px;background:#fff;border-top:1px solid #808080;border-left:1px solid #808080;border-bottom:1px solid #fff;border-right:1px solid #fff;box-shadow:1px 1px 0 #e0e0e0"></div><div class="t" style="left:699.5px;top:364.5px;font-size:8.4px">Fixed Equip</div><div class="a" style="left:750px;top:365px;width:7px;height:7px;background:#fff;border-top:1px solid #808080;border-left:1px solid #808080;border-bottom:1px solid #fff;border-right:1px solid #fff;box-shadow:1px 1px 0 #e0e0e0"></div><div class="t" style="left:761.3px;top:364.5px;font-size:8.4px">Mighty Guard</div><div class="a" style="left:681px;top:395px;width:68px;height:106px;border:1px solid #a8a8a8;box-shadow:inset 1px 1px 0 #fff,1px 1px 0 #fff"></div><div class="t" style="left:685.7px;top:391px;background:#f0f0f0;padding:0 1.5px;font-size:8px;letter-spacing:.2px">State Rate</div><div class="a" style="left:686px;top:402px;width:58px;height:96px;background:#fff;border-top:1px solid #a0a0a0;border-left:1px solid #a0a0a0;box-shadow:inset 1px 1px 0 #696969"></div><div class="a" style="left:687.5px;top:403.7px;width:7.0px;height:7.199999999999989px;background:#fff;border:1px solid #c0c4c0;"></div><div class="t" style="left:688.5px;top:404.0px;font-size:7.8px;font-weight:bold;color:#0c6e0c">C</div><div class="t" style="left:696.7px;top:403.4px;font-size:8.4px">Death</div><div class="a" style="left:687.5px;top:412.37px;width:7.0px;height:7.199999999999989px;background:#fff;border:1px solid #c0c4c0;"></div><div class="t" style="left:688.5px;top:412.67px;font-size:7.8px;font-weight:bold;color:#0c6e0c">C</div><div class="t" style="left:696.7px;top:412.07px;font-size:8.4px">Poison</div><div class="a" style="left:687.5px;top:421.03999999999996px;width:7.0px;height:7.199999999999989px;background:#fff;border:1px solid #c0c4c0;"></div><div class="t" style="left:688.5px;top:421.34px;font-size:7.8px;font-weight:bold;color:#0c6e0c">C</div><div class="t" style="left:696.7px;top:420.73999999999995px;font-size:8.4px">Blind</div><div class="a" style="left:687.5px;top:429.71px;width:7.0px;height:7.199999999999989px;background:#fff;border:1px solid #c0c4c0;"></div><div class="t" style="left:688.5px;top:430.01px;font-size:7.8px;font-weight:bold;color:#0c6e0c">C</div><div class="t" style="left:696.7px;top:429.40999999999997px;font-size:8.4px">Silence</div><div class="a" style="left:687.5px;top:438.38px;width:7.0px;height:7.199999999999989px;background:#fff;border:1px solid #c0c4c0;"></div><div class="t" style="left:688.5px;top:438.68px;font-size:7.8px;font-weight:bold;color:#0c6e0c">C</div><div class="t" style="left:696.7px;top:438.08px;font-size:8.4px">Provoke</div><div class="a" style="left:687.5px;top:447.05px;width:7.0px;height:7.199999999999989px;background:#fff;border:1px solid #c0c4c0;"></div><div class="t" style="left:688.5px;top:447.35px;font-size:7.8px;font-weight:bold;color:#0c6e0c">C</div><div class="t" style="left:696.7px;top:446.75px;font-size:8.4px">Confuse</div><div class="a" style="left:687.5px;top:455.71999999999997px;width:7.0px;height:7.199999999999989px;background:#fff;border:1px solid #c0c4c0;"></div><div class="t" style="left:688.5px;top:456.02px;font-size:7.8px;font-weight:bold;color:#0c6e0c">C</div><div class="t" style="left:696.7px;top:455.41999999999996px;font-size:8.4px">Sleep</div><div class="a" style="left:687.5px;top:464.39px;width:7.0px;height:7.199999999999989px;background:#fff;border:1px solid #c0c4c0;"></div><div class="t" style="left:688.5px;top:464.69px;font-size:7.8px;font-weight:bold;color:#0c6e0c">C</div><div class="t" style="left:696.7px;top:464.09px;font-size:8.4px">Paralyze</div><div class="a" style="left:687.5px;top:473.06px;width:7.0px;height:7.199999999999989px;background:#fff;border:1px solid #c0c4c0;"></div><div class="t" style="left:688.5px;top:473.36px;font-size:7.8px;font-weight:bold;color:#0c6e0c">C</div><div class="t" style="left:696.7px;top:472.76px;font-size:8.4px">Stun</div><div class="a" style="left:687.5px;top:481.73px;width:7.0px;height:7.199999999999989px;background:#fff;border:1px solid #c0c4c0;"></div><div class="t" style="left:688.5px;top:482.03000000000003px;font-size:7.8px;font-weight:bold;color:#0c6e0c">C</div><div class="t" style="left:696.7px;top:481.43px;font-size:8.4px">Shock</div><div class="a" style="left:753px;top:395px;width:68px;height:106px;border:1px solid #a8a8a8;box-shadow:inset 1px 1px 0 #fff,1px 1px 0 #fff"></div><div class="t" style="left:757.6px;top:391px;background:#f0f0f0;padding:0 1.5px;font-size:8px;letter-spacing:.2px">Element Guard</div><div class="a" style="left:758px;top:402px;width:58px;height:96px;background:#fff;border-top:1px solid #a0a0a0;border-left:1px solid #a0a0a0;box-shadow:inset 1px 1px 0 #696969"></div><div class="a" style="left:759.6px;top:403.7px;width:7.0px;height:7.199999999999989px;background:#fff;border:1px solid #c0c4c0;"></div><div class="t" style="left:760.6px;top:404.0px;font-size:7.8px;font-weight:bold;color:#0c6e0c">C</div><div class="t" style="left:768.8000000000001px;top:403.4px;font-size:8.4px">Sword</div><div class="a" style="left:759.6px;top:412.37px;width:7.0px;height:7.199999999999989px;background:#fff;border:1px solid #c0c4c0;"></div><div class="t" style="left:760.6px;top:412.67px;font-size:7.8px;font-weight:bold;color:#0c6e0c">C</div><div class="t" style="left:768.8000000000001px;top:412.07px;font-size:8.4px">Spear</div><div class="a" style="left:759.6px;top:421.03999999999996px;width:7.0px;height:7.199999999999989px;background:#fff;border:1px solid #c0c4c0;"></div><div class="t" style="left:760.6px;top:421.34px;font-size:7.8px;font-weight:bold;color:#0c6e0c">C</div><div class="t" style="left:768.8000000000001px;top:420.73999999999995px;font-size:8.4px">Hit</div><div class="a" style="left:759.6px;top:429.71px;width:7.0px;height:7.199999999999989px;background:#fff;border:1px solid #c0c4c0;"></div><div class="t" style="left:760.6px;top:430.01px;font-size:7.8px;font-weight:bold;color:#0c6e0c">C</div><div class="t" style="left:768.8000000000001px;top:429.40999999999997px;font-size:8.4px">Bow</div><div class="a" style="left:759.6px;top:438.38px;width:7.0px;height:7.199999999999989px;background:#fff;border:1px solid #c0c4c0;"></div><div class="t" style="left:760.6px;top:438.68px;font-size:7.8px;font-weight:bold;color:#0c6e0c">C</div><div class="t" style="left:768.8000000000001px;top:438.08px;font-size:8.4px">Fire</div><div class="a" style="left:759.6px;top:447.05px;width:7.0px;height:7.199999999999989px;background:#fff;border:1px solid #c0c4c0;"></div><div class="t" style="left:760.6px;top:447.35px;font-size:7.8px;font-weight:bold;color:#0c6e0c">C</div><div class="t" style="left:768.8000000000001px;top:446.75px;font-size:8.4px">Ice</div><div class="a" style="left:759.6px;top:455.71999999999997px;width:7.0px;height:7.199999999999989px;background:#fff;border:1px solid #c0c4c0;"></div><div class="t" style="left:760.6px;top:456.02px;font-size:7.8px;font-weight:bold;color:#0c6e0c">C</div><div class="t" style="left:768.8000000000001px;top:455.41999999999996px;font-size:8.4px">Thunder</div><div class="a" style="left:759.6px;top:464.39px;width:7.0px;height:7.199999999999989px;background:#fff;border:1px solid #c0c4c0;"></div><div class="t" style="left:760.6px;top:464.69px;font-size:7.8px;font-weight:bold;color:#0c6e0c">C</div><div class="t" style="left:768.8000000000001px;top:464.09px;font-size:8.4px">Water</div><div class="a" style="left:759.6px;top:473.06px;width:7.0px;height:7.199999999999989px;background:#fff;border:1px solid #c0c4c0;"></div><div class="t" style="left:760.6px;top:473.36px;font-size:7.8px;font-weight:bold;color:#0c6e0c">C</div><div class="t" style="left:768.8000000000001px;top:472.76px;font-size:8.4px">Earth</div><div class="a" style="left:759.6px;top:481.73px;width:7.0px;height:7.199999999999989px;background:#fff;border:1px solid #c0c4c0;"></div><div class="t" style="left:760.6px;top:482.03000000000003px;font-size:7.8px;font-weight:bold;color:#0c6e0c">C</div><div class="t" style="left:768.8000000000001px;top:481.43px;font-size:8.4px">Wind</div><div class="a" style="left:759.6px;top:490.4px;width:7.0px;height:7.199999999999989px;background:#fff;border:1px solid #c0c4c0;"></div><div class="t" style="left:760.6px;top:490.7px;font-size:7.8px;font-weight:bold;color:#0c6e0c">C</div><div class="t" style="left:768.8000000000001px;top:490.09999999999997px;font-size:8.4px">Holy</div><div class="a" style="left:805px;top:403px;width:10px;height:94px;background:#f2f2f2"></div><div class="a" style="left:806px;top:414px;width:8px;height:46px;background:linear-gradient(90deg,#e8e8e8,#d8d8d8);border:1px solid #b8b8b8;border-radius:1px"></div><svg class="a" style="left:807px;top:405px" width="6" height="4"><path d="M0.5 3.5H5.5L3 0.5Z" fill="#333"/></svg><svg class="a" style="left:807px;top:490px" width="6" height="4"><path d="M0.5 0.5H5.5L3 3.5Z" fill="#333"/></svg><div class="a" style="left:826px;top:210px;width:138px;height:292px;border:1px solid #a8a8a8;box-shadow:inset 1px 1px 0 #fff,1px 1px 0 #fff"></div><div class="t" style="left:830.8px;top:205.5px;background:#f0f0f0;padding:0 1.5px;font-size:8px;letter-spacing:.2px">Skills</div><div class="a" style="left:830px;top:216px;width:128px;height:279px;background:#fff;border-top:1px solid #a0a0a0;border-left:1px solid #a0a0a0;box-shadow:inset 1px 1px 0 #696969"></div><div class="a" style="left:832px;top:218px;width:126px;height:10px;background:#f0f0f0;border-bottom:1px solid #c8c8c8"></div><div class="a" style="left:862px;top:218px;width:1px;height:10px;background:#c8c8c8"></div><div class="a" style="left:950px;top:218px;width:1px;height:10px;background:#c8c8c8"></div><div class="t" style="left:835px;top:219px;font-size:8.4px">Level</div><div class="t" style="left:868px;top:219px;font-size:8.4px">Skill</div><svg class="a" style="left:318.5px;top:532.8px" width="10" height="9" viewBox="0 0 10 9"><path d="M3 7.5V1.8L9 0.5V6.5" stroke="#1a1a1a" stroke-width="1.1" fill="none"/><path d="M3 2L9 0.7M3 4L9 2.7" stroke="#1a1a1a" stroke-width="1.3"/><ellipse cx="2" cy="7.6" rx="1.8" ry="1.3" fill="#e8c800"/><ellipse cx="8" cy="6.7" rx="1.8" ry="1.3" fill="#d83818"/></svg><div class="a" style="left:714px;top:530px;width:58px;height:16px;background:#f0f0f0;box-shadow:inset -1px -1px 0 #696969,inset 1px 1px 0 #fff,inset -2px -2px 0 #a0a0a0"></div><div class="t" style="left:714.4px;width:57.5px;top:533.65px;text-align:center;font-size:8.6px;"><u>O</u>K</div><div class="a" style="left:778px;top:530px;width:58px;height:16px;background:#f0f0f0;box-shadow:inset -1px -1px 0 #696969,inset 1px 1px 0 #fff,inset -2px -2px 0 #a0a0a0"></div><div class="t" style="left:778px;width:57.60000000000002px;top:533.65px;text-align:center;font-size:8.6px;">Cancel</div><div class="a" style="left:842px;top:530px;width:58px;height:16px;background:#f0f0f0;box-shadow:inset -1px -1px 0 #696969,inset 1px 1px 0 #fff,inset -2px -2px 0 #a0a0a0"></div><div class="t" style="left:842.4px;width:57.30000000000007px;top:533.65px;text-align:center;font-size:8.6px;"><u>A</u>pply</div><div class="a" style="left:906px;top:530px;width:58px;height:16px;background:#f0f0f0;box-shadow:inset -1px -1px 0 #696969,inset 1px 1px 0 #fff,inset -2px -2px 0 #a0a0a0"></div><div class="t" style="left:906.3px;width:57.700000000000045px;top:533.65px;text-align:center;font-size:8.6px;"><u>H</u>elp</div></body></html>
